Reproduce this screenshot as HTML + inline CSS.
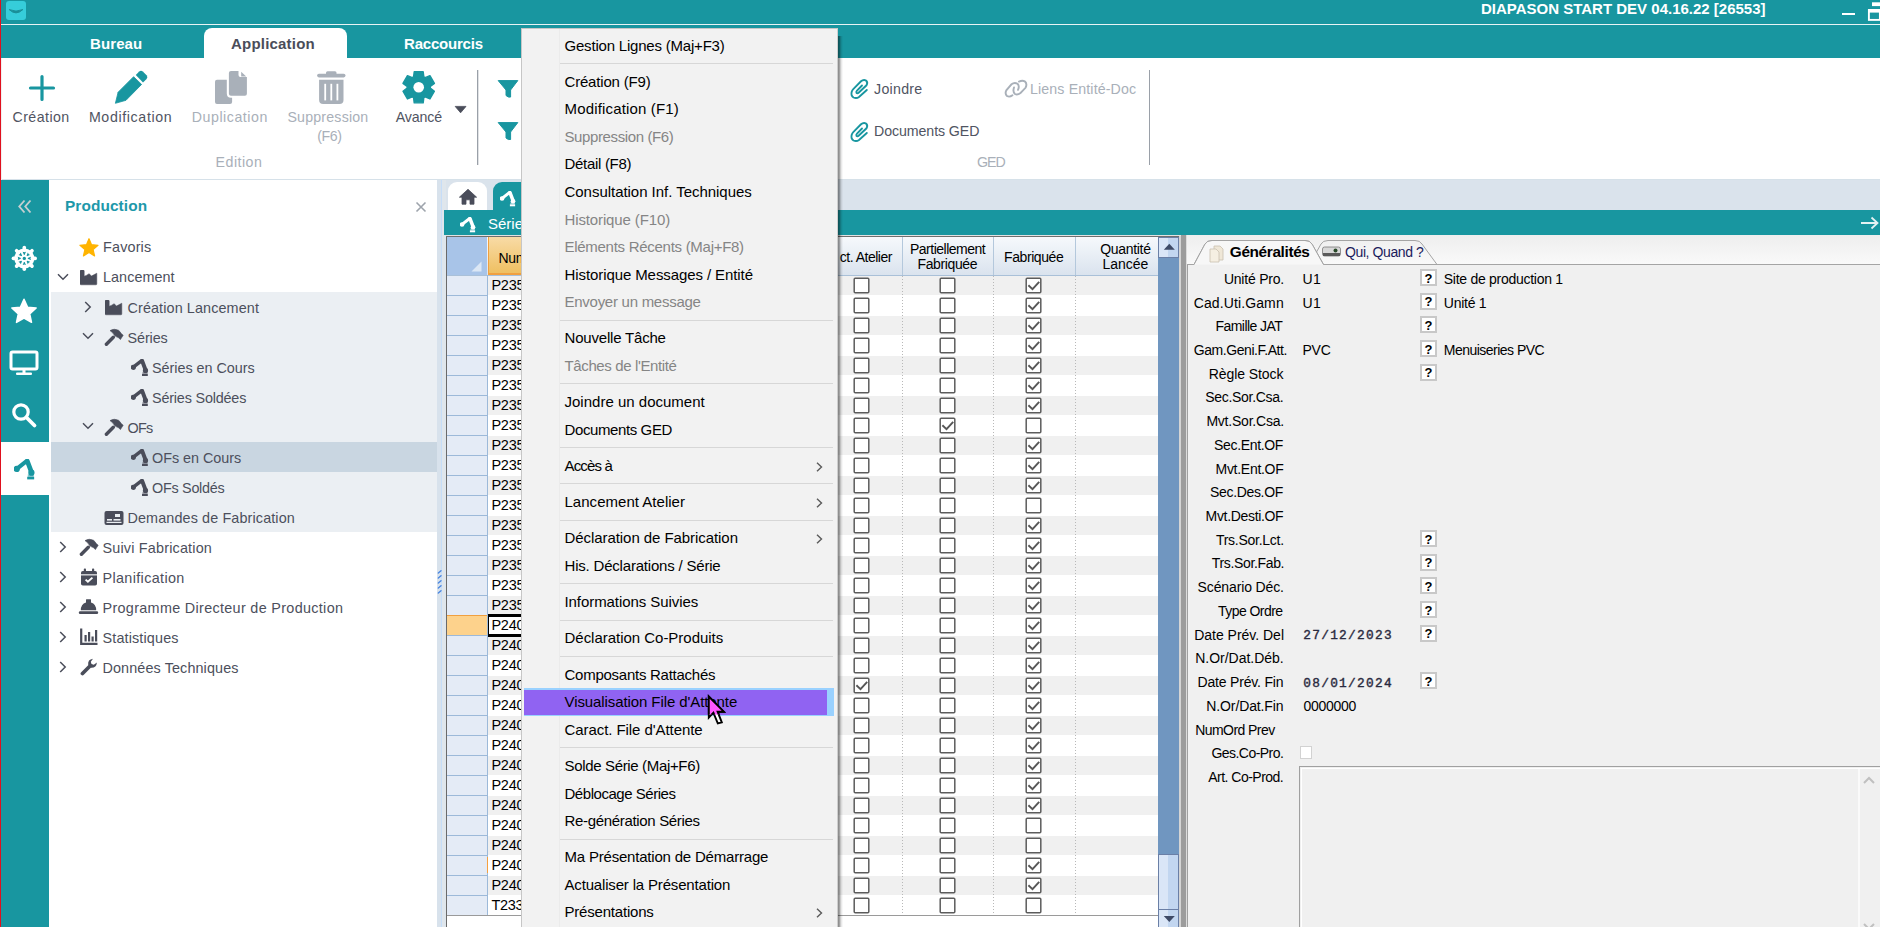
<!DOCTYPE html>
<html><head><meta charset="utf-8"><style>
html,body{margin:0;padding:0;}
body{width:1880px;height:927px;overflow:hidden;position:relative;background:#f0f0f0;font-family:"Liberation Sans", sans-serif;}
</style></head><body>
<div style="position:absolute;left:0px;top:0px;width:1880px;height:58px;background:#1896a0"></div>
<div style="position:absolute;left:0px;top:24px;width:1880px;height:1px;background:#e8f4f5"></div>
<svg style="position:absolute;left:6px;top:1px" width="21" height="20" viewBox="0 0 21 20"><rect x="0" y="0" width="20" height="19" rx="3" fill="#36cdda"/><path d="M3.2,8.6 Q10,15.2 16.8,8.6 Q10,11.6 3.2,8.6Z" fill="#1a8f98" stroke="#1a8f98" stroke-width="1" stroke-linejoin="round"/></svg>
<div style="position:absolute;left:1481px;top:0.30px;font:bold 15px/18.00px 'Liberation Sans', sans-serif;color:#ffffff;letter-spacing:0px;white-space:nowrap;">DIAPASON START DEV 04.16.22 [26553]</div>
<div style="position:absolute;left:1842px;top:13px;width:13px;height:2px;background:#fff"></div>
<svg style="position:absolute;left:1867px;top:1px" width="13" height="21"><path d="M5 1.3h8v3.8h-8z" fill="#fff"/><rect x="1.9" y="9" width="11" height="9.9" fill="none" stroke="#fff" stroke-width="1.9"/><rect x="1" y="8" width="12" height="3.6" fill="#fff"/></svg>
<div style="position:absolute;left:90px;top:34.80px;font:bold 15px/18.00px 'Liberation Sans', sans-serif;color:#ffffff;letter-spacing:0.1px;white-space:nowrap;">Bureau</div>
<div style="position:absolute;left:204px;top:28px;width:143px;height:31px;background:#fff;border-radius:8px 8px 0 0"></div>
<div style="position:absolute;left:231px;top:34.80px;font:bold 15px/18.00px 'Liberation Sans', sans-serif;color:#4a4d5a;letter-spacing:0.2px;white-space:nowrap;">Application</div>
<div style="position:absolute;left:404px;top:34.80px;font:bold 15px/18.00px 'Liberation Sans', sans-serif;color:#ffffff;letter-spacing:-0.2px;white-space:nowrap;">Raccourcis</div>
<div style="position:absolute;left:2px;top:58px;width:1878px;height:121px;background:#ffffff"></div>
<div style="position:absolute;left:2px;top:179px;width:1878px;height:1px;background:#d6e1e9"></div>
<div style="position:absolute;left:0px;top:0px;width:1px;height:927px;background:#e0101e"></div>
<svg style="position:absolute;left:0;top:0" width="560" height="180" viewBox="0 0 560 180">
<path d="M42 76.5V99.5M30.5 88H53.5" stroke="#1896a0" stroke-width="3.2" stroke-linecap="round"/>
<path d="M115.4,103.3 L118.1,92.2 L133.6,76.7 L141.6,84.4 L126,100.3 Z" fill="#1896a0" stroke="#1896a0" stroke-width="0.8" stroke-linejoin="round"/>
<path d="M135.8,75 L139.2,71.6 Q141,70 142.8,71.6 L146.6,75.2 Q148.2,77.2 146.6,79 L143,82.6 Z" fill="#1896a0"/>
<path d="M217,79.8 H226.8 V93.5 Q226.8,97.7 231,97.7 H232.1 V102 Q232.1,104.1 230,104.1 H217 Q215,104.1 215,102 V81.8 Q215,79.8 217,79.8Z" fill="#a9b0b9"/>
<path d="M231,71 H238.5 V75 Q238.5,77 240.5,77 H246.9 V93.7 Q246.9,95.7 244.9,95.7 H231 Q228.9,95.7 228.9,93.7 V73 Q228.9,71 231,71Z" fill="#a9b0b9"/>
<path d="M241.2,71.8 L246.2,76.5 H241.2Z" fill="#a9b0b9"/>
<rect x="317.1" y="73.8" width="28.4" height="3.6" rx="1.8" fill="#a9b0b9"/>
<rect x="326" y="71.2" width="10.5" height="3.5" rx="1.5" fill="#a9b0b9"/>
<path d="M319.1,79.8 H343.5 V100 Q343.5,104.1 339.5,104.1 H323.1 Q319.1,104.1 319.1,100Z" fill="#a9b0b9"/>
<rect x="324.3" y="83.8" width="1.8" height="16.6" fill="#fff"/><rect x="330.4" y="83.8" width="1.8" height="16.6" fill="#fff"/><rect x="336.5" y="83.8" width="1.8" height="16.6" fill="#fff"/>
<path d="M413.55,76.91 L414.22,71.73 L423.18,71.73 L423.85,76.91 L425.13,77.64 L429.94,75.64 L434.42,83.39 L430.28,86.56 L430.28,88.04 L434.42,91.21 L429.94,98.96 L425.13,96.96 L423.85,97.69 L423.18,102.87 L414.22,102.87 L413.55,97.69 L412.27,96.96 L407.46,98.96 L402.98,91.21 L407.12,88.04 L407.12,86.56 L402.98,83.39 L407.46,75.64 L412.27,77.64Z" fill="#1896a0" stroke="#1896a0" stroke-width="1.4" stroke-linejoin="round"/>
<circle cx="418.7" cy="87.3" r="5.3" fill="#fff"/>
<path d="M455.2,106.4 H466 L460.6,112.8Z" fill="#4a4d5a" stroke="#4a4d5a" stroke-width="0.8" stroke-linejoin="round"/>
<rect x="477" y="70" width="1.3" height="95" fill="#9aa0a8"/>
<path d="M498.2,80.6 H517.8 L510.6,90 V97 Q508.5,97.8 506,95.5 V90Z" fill="#1896a0" stroke="#1896a0" stroke-width="1" stroke-linejoin="round"/>
<path d="M498.2,122.6 H517.8 L510.6,132 V139.5 Q508.5,140.3 506,138 V132Z" fill="#1896a0" stroke="#1896a0" stroke-width="1" stroke-linejoin="round"/>
</svg>
<div style="position:absolute;left:12.5px;top:108.86px;font:normal 14.2px/17.04px 'Liberation Sans', sans-serif;color:#505462;letter-spacing:0.443px;white-space:nowrap;">Création</div>
<div style="position:absolute;left:88.9px;top:108.86px;font:normal 14.2px/17.04px 'Liberation Sans', sans-serif;color:#505462;letter-spacing:0.645px;white-space:nowrap;">Modification</div>
<div style="position:absolute;left:191.8px;top:108.86px;font:normal 14.2px/17.04px 'Liberation Sans', sans-serif;color:#a9b0b9;letter-spacing:0.53px;white-space:nowrap;">Duplication</div>
<div style="position:absolute;left:287.4px;top:108.86px;font:normal 14.2px/17.04px 'Liberation Sans', sans-serif;color:#a9b0b9;letter-spacing:0.2px;white-space:nowrap;">Suppression</div>
<div style="position:absolute;left:317.2px;top:127.86px;font:normal 14.2px/17.04px 'Liberation Sans', sans-serif;color:#a9b0b9;letter-spacing:-0.367px;white-space:nowrap;">(F6)</div>
<div style="position:absolute;left:395.7px;top:108.86px;font:normal 14.2px/17.04px 'Liberation Sans', sans-serif;color:#505462;letter-spacing:-0.12px;white-space:nowrap;">Avancé</div>
<div style="position:absolute;left:215.6px;top:153.86px;font:normal 14.2px/17.04px 'Liberation Sans', sans-serif;color:#a9b0b9;letter-spacing:0.467px;white-space:nowrap;">Edition</div>
<svg style="position:absolute;left:845px;top:75px" width="30" height="25" viewBox="0 0 30 25"><path d="M21.8,15 L14,22 Q11.5,23.8 8.5,22.5 Q5.5,20.5 6.8,16.5 Q7.3,15 8.5,13.8 L16,6.3 Q18.5,4 21,5.5 Q23.2,7.5 21.5,10.3 L13.6,17.7 Q12.3,18.8 11.5,17.8 Q10.9,16.8 12,15.6 L17,10.5" fill="none" stroke="#1896a0" stroke-width="1.9" stroke-linecap="round"/></svg>
<svg style="position:absolute;left:845px;top:117.5px" width="30" height="25" viewBox="0 0 30 25"><path d="M21.8,15 L14,22 Q11.5,23.8 8.5,22.5 Q5.5,20.5 6.8,16.5 Q7.3,15 8.5,13.8 L16,6.3 Q18.5,4 21,5.5 Q23.2,7.5 21.5,10.3 L13.6,17.7 Q12.3,18.8 11.5,17.8 Q10.9,16.8 12,15.6 L17,10.5" fill="none" stroke="#1896a0" stroke-width="1.9" stroke-linecap="round"/></svg>
<div style="position:absolute;left:874px;top:80.56px;font:normal 14.2px/17.04px 'Liberation Sans', sans-serif;color:#505462;letter-spacing:0.283px;white-space:nowrap;">Joindre</div>
<div style="position:absolute;left:874px;top:122.56px;font:normal 14.2px/17.04px 'Liberation Sans', sans-serif;color:#505462;letter-spacing:-0.083px;white-space:nowrap;">Documents GED</div>
<svg style="position:absolute;left:1000px;top:75px" width="32" height="25" viewBox="0 0 32 25"><path d="M12.5,20.3 Q9.5,22.5 7,21 Q4.5,18.5 6.5,15 L11.5,9.3 Q14.5,7 17.5,8.8 Q19.8,11 18,14.8" fill="none" stroke="#a9b0b9" stroke-width="1.9" stroke-linecap="round"/><path d="M19,6.6 Q22.5,4.8 25,6.5 Q27.5,9 25.5,12.8 L20.5,18 Q17.5,20.3 15,19 Q12.5,17 14,12.5" fill="none" stroke="#a9b0b9" stroke-width="1.9" stroke-linecap="round"/></svg>
<div style="position:absolute;left:1030px;top:80.56px;font:normal 14.2px/17.04px 'Liberation Sans', sans-serif;color:#a9b0b9;letter-spacing:0.133px;white-space:nowrap;">Liens Entité-Doc</div>
<div style="position:absolute;left:977px;top:153.56px;font:normal 14.2px/17.04px 'Liberation Sans', sans-serif;color:#a9b0b9;letter-spacing:-1.0px;white-space:nowrap;">GED</div>
<div style="position:absolute;left:1148.5px;top:70px;width:1.3px;height:95px;background:#9aa0a8"></div>
<div style="position:absolute;left:1px;top:180px;width:48px;height:747px;background:#1896a0"></div>
<svg style="position:absolute;left:0;top:180px" width="50" height="320" viewBox="0 180 50 320">
<path d="M24.5,200.5 L19.3,206.5 L24.5,212.5 M30.5,200.5 L25.3,206.5 L30.5,212.5" fill="none" stroke="#c5cfd0" stroke-width="1.9"/>
<circle cx="24.3" cy="258.4" r="8.4" fill="none" stroke="#fff" stroke-width="3.2"/>
<circle cx="24.3" cy="258.4" r="2.6" fill="none" stroke="#fff" stroke-width="1.8"/>
<line x1="26.70" y1="259.39" x2="32.15" y2="261.65" stroke="#fff" stroke-width="2"/><line x1="32.30" y1="258.40" x2="35.20" y2="258.40" stroke="#fff" stroke-width="3.6" stroke-linecap="round"/><line x1="25.29" y1="260.80" x2="27.55" y2="266.25" stroke="#fff" stroke-width="2"/><line x1="29.96" y1="264.06" x2="32.01" y2="266.11" stroke="#fff" stroke-width="3.6" stroke-linecap="round"/><line x1="23.31" y1="260.80" x2="21.05" y2="266.25" stroke="#fff" stroke-width="2"/><line x1="24.30" y1="266.40" x2="24.30" y2="269.30" stroke="#fff" stroke-width="3.6" stroke-linecap="round"/><line x1="21.90" y1="259.39" x2="16.45" y2="261.65" stroke="#fff" stroke-width="2"/><line x1="18.64" y1="264.06" x2="16.59" y2="266.11" stroke="#fff" stroke-width="3.6" stroke-linecap="round"/><line x1="21.90" y1="257.41" x2="16.45" y2="255.15" stroke="#fff" stroke-width="2"/><line x1="16.30" y1="258.40" x2="13.40" y2="258.40" stroke="#fff" stroke-width="3.6" stroke-linecap="round"/><line x1="23.31" y1="256.00" x2="21.05" y2="250.55" stroke="#fff" stroke-width="2"/><line x1="18.64" y1="252.74" x2="16.59" y2="250.69" stroke="#fff" stroke-width="3.6" stroke-linecap="round"/><line x1="25.29" y1="256.00" x2="27.55" y2="250.55" stroke="#fff" stroke-width="2"/><line x1="24.30" y1="250.40" x2="24.30" y2="247.50" stroke="#fff" stroke-width="3.6" stroke-linecap="round"/><line x1="26.70" y1="257.41" x2="32.15" y2="255.15" stroke="#fff" stroke-width="2"/><line x1="29.96" y1="252.74" x2="32.01" y2="250.69" stroke="#fff" stroke-width="3.6" stroke-linecap="round"/>
<path d="M24.00,299.20 L27.53,307.15 L36.17,308.04 L29.71,313.85 L31.52,322.36 L24.00,318.00 L16.48,322.36 L18.29,313.85 L11.83,308.04 L20.47,307.15Z" fill="#fff" stroke="#fff" stroke-width="1.5" stroke-linejoin="round"/>
<rect x="11" y="352" width="26" height="17" rx="1.5" fill="none" stroke="#fff" stroke-width="3"/>
<rect x="22.5" y="369" width="3" height="4" fill="#fff"/>
<rect x="16" y="372.5" width="16" height="2.6" rx="1" fill="#fff"/>
<circle cx="21" cy="412" r="7.2" fill="none" stroke="#fff" stroke-width="3.2"/>
<path d="M26.5,417.5 L34.5,425.5" stroke="#fff" stroke-width="3.8" stroke-linecap="round"/>
</svg>
<div style="position:absolute;left:1px;top:442px;width:48px;height:53px;background:#ffffff"></div>
<div style="position:absolute;left:49px;top:180px;width:1px;height:747px;background:#c2e3e7"></div>
<svg style="position:absolute;left:14px;top:459px" width="21.6" height="22.8" viewBox="0.5 0.8 18 19">
<path d="M2.8,9 L11.2,2.4" stroke="#1896a0" stroke-width="3.4" stroke-linecap="round"/>
<circle cx="2.8" cy="9.1" r="2.6" fill="#1896a0"/>
<path d="M11.6,2.6 L14.6,10.5" stroke="#1896a0" stroke-width="3.9" stroke-linecap="round"/>
<circle cx="15" cy="12.2" r="2.6" fill="#1896a0"/>
<rect x="12" y="13.6" width="5" height="2" fill="#1896a0" opacity="0.55"/>
<rect x="11.5" y="15.6" width="5.8" height="2.2" fill="#1896a0"/>
</svg>
<div style="position:absolute;left:49px;top:180px;width:388px;height:747px;background:#ffffff"></div>
<div style="position:absolute;left:51px;top:292px;width:386px;height:240px;background:#ebeff3"></div>
<div style="position:absolute;left:51px;top:442px;width:386px;height:30px;background:#c9d6e1"></div>
<div style="position:absolute;left:65px;top:196.92px;font:bold 15.4px/18.48px 'Liberation Sans', sans-serif;color:#1d98aa;letter-spacing:0.1px;white-space:nowrap;">Production</div>
<svg style="position:absolute;left:414px;top:200px" width="14" height="14"><path d="M2.5,2.5 L11.5,11.5 M11.5,2.5 L2.5,11.5" stroke="#9ea4ac" stroke-width="1.6"/></svg>
<svg style="position:absolute;left:79px;top:238px" width="20" height="19" viewBox="0 0 20 19"><path d="M10.00,0.70 L12.53,6.72 L19.04,7.26 L14.09,11.53 L15.58,17.89 L10.00,14.50 L4.42,17.89 L5.91,11.53 L0.96,7.26 L7.47,6.72Z" fill="#ffb400" stroke="#ffb400" stroke-width="1.2" stroke-linejoin="round"/></svg>
<div style="position:absolute;left:103.0px;top:239.17px;font:normal 14.4px/17.28px 'Liberation Sans', sans-serif;color:#4c4f5c;letter-spacing:0.167px;white-space:nowrap;">Favoris</div>
<svg style="position:absolute;left:57px;top:273px" width="12" height="8"><path d="M1,1.2 L6,6.2 L11,1.2" fill="none" stroke="#4a4d5a" stroke-width="1.5"/></svg>
<svg style="position:absolute;left:80px;top:270px" width="19" height="16" viewBox="0 0 19 16"><path d="M1,0 H3.2 Q4.2,0 4.2,1 V6.2 L6.3,5.4 L9.2,3.7 L11.4,6.1 L16.8,3.2 V14 Q16.8,14.8 16,14.8 H1 Q0,14.8 0,14 V1 Q0,0 1,0Z" fill="#4a4d5a" stroke="#4a4d5a" stroke-width="0.5" stroke-linejoin="round"/></svg>
<div style="position:absolute;left:103.0px;top:269.37px;font:normal 14.4px/17.28px 'Liberation Sans', sans-serif;color:#4c4f5c;letter-spacing:0.05px;white-space:nowrap;">Lancement</div>
<svg style="position:absolute;left:84px;top:301px" width="8" height="12"><path d="M1.2,1 L6.2,6 L1.2,11" fill="none" stroke="#4a4d5a" stroke-width="1.5"/></svg>
<svg style="position:absolute;left:104.5px;top:299.5px" width="19" height="16" viewBox="0 0 19 16"><path d="M1,0 H3.2 Q4.2,0 4.2,1 V6.2 L6.3,5.4 L9.2,3.7 L11.4,6.1 L16.8,3.2 V14 Q16.8,14.8 16,14.8 H1 Q0,14.8 0,14 V1 Q0,0 1,0Z" fill="#4a4d5a" stroke="#4a4d5a" stroke-width="0.5" stroke-linejoin="round"/></svg>
<div style="position:absolute;left:127.5px;top:299.77px;font:normal 14.4px/17.28px 'Liberation Sans', sans-serif;color:#4c4f5c;letter-spacing:0.106px;white-space:nowrap;">Création Lancement</div>
<svg style="position:absolute;left:82px;top:332px" width="12" height="8"><path d="M1,1.2 L6,6.2 L11,1.2" fill="none" stroke="#4a4d5a" stroke-width="1.5"/></svg>
<svg style="position:absolute;left:104px;top:328px" width="20" height="18" viewBox="0 0 20 18"><path d="M2.4,16.2 L9.3,9.3" stroke="#4a4d5a" stroke-width="3.4" stroke-linecap="round"/><path d="M6,2.6 Q10,0 14.5,2.3 Q16.2,3.5 17.2,5.6 L19.2,7.2 L16.4,11.6 L14.2,9.4 Q12,8.9 10.6,7.6 Q9.3,4.8 6,2.6Z" fill="#4a4d5a" stroke="#4a4d5a" stroke-width="0.6" stroke-linejoin="round"/></svg>
<div style="position:absolute;left:127.5px;top:329.97px;font:normal 14.4px/17.28px 'Liberation Sans', sans-serif;color:#4c4f5c;letter-spacing:-0.1px;white-space:nowrap;">Séries</div>
<svg style="position:absolute;left:130.5px;top:358.5px" width="18.0" height="19.0" viewBox="0.5 0.8 18 19">
<path d="M2.8,9 L11.2,2.4" stroke="#4a4d5a" stroke-width="3.4" stroke-linecap="round"/>
<circle cx="2.8" cy="9.1" r="2.6" fill="#4a4d5a"/>
<path d="M11.6,2.6 L14.6,10.5" stroke="#4a4d5a" stroke-width="3.9" stroke-linecap="round"/>
<circle cx="15" cy="12.2" r="2.6" fill="#4a4d5a"/>
<rect x="12" y="13.6" width="5" height="2" fill="#4a4d5a" opacity="0.55"/>
<rect x="11.5" y="15.6" width="5.8" height="2.2" fill="#4a4d5a"/>
</svg>
<div style="position:absolute;left:152.0px;top:359.67px;font:normal 14.4px/17.28px 'Liberation Sans', sans-serif;color:#4c4f5c;letter-spacing:-0.036px;white-space:nowrap;">Séries en Cours</div>
<svg style="position:absolute;left:130.5px;top:388.5px" width="18.0" height="19.0" viewBox="0.5 0.8 18 19">
<path d="M2.8,9 L11.2,2.4" stroke="#4a4d5a" stroke-width="3.4" stroke-linecap="round"/>
<circle cx="2.8" cy="9.1" r="2.6" fill="#4a4d5a"/>
<path d="M11.6,2.6 L14.6,10.5" stroke="#4a4d5a" stroke-width="3.9" stroke-linecap="round"/>
<circle cx="15" cy="12.2" r="2.6" fill="#4a4d5a"/>
<rect x="12" y="13.6" width="5" height="2" fill="#4a4d5a" opacity="0.55"/>
<rect x="11.5" y="15.6" width="5.8" height="2.2" fill="#4a4d5a"/>
</svg>
<div style="position:absolute;left:152.0px;top:389.67px;font:normal 14.4px/17.28px 'Liberation Sans', sans-serif;color:#4c4f5c;letter-spacing:-0.185px;white-space:nowrap;">Séries Soldées</div>
<svg style="position:absolute;left:82px;top:422px" width="12" height="8"><path d="M1,1.2 L6,6.2 L11,1.2" fill="none" stroke="#4a4d5a" stroke-width="1.5"/></svg>
<svg style="position:absolute;left:104px;top:418px" width="20" height="18" viewBox="0 0 20 18"><path d="M2.4,16.2 L9.3,9.3" stroke="#4a4d5a" stroke-width="3.4" stroke-linecap="round"/><path d="M6,2.6 Q10,0 14.5,2.3 Q16.2,3.5 17.2,5.6 L19.2,7.2 L16.4,11.6 L14.2,9.4 Q12,8.9 10.6,7.6 Q9.3,4.8 6,2.6Z" fill="#4a4d5a" stroke="#4a4d5a" stroke-width="0.6" stroke-linejoin="round"/></svg>
<div style="position:absolute;left:127.5px;top:419.87px;font:normal 14.4px/17.28px 'Liberation Sans', sans-serif;color:#4c4f5c;letter-spacing:-0.8px;white-space:nowrap;">OFs</div>
<svg style="position:absolute;left:130.5px;top:448.5px" width="18.0" height="19.0" viewBox="0.5 0.8 18 19">
<path d="M2.8,9 L11.2,2.4" stroke="#4a4d5a" stroke-width="3.4" stroke-linecap="round"/>
<circle cx="2.8" cy="9.1" r="2.6" fill="#4a4d5a"/>
<path d="M11.6,2.6 L14.6,10.5" stroke="#4a4d5a" stroke-width="3.9" stroke-linecap="round"/>
<circle cx="15" cy="12.2" r="2.6" fill="#4a4d5a"/>
<rect x="12" y="13.6" width="5" height="2" fill="#4a4d5a" opacity="0.55"/>
<rect x="11.5" y="15.6" width="5.8" height="2.2" fill="#4a4d5a"/>
</svg>
<div style="position:absolute;left:152.0px;top:449.67px;font:normal 14.4px/17.28px 'Liberation Sans', sans-serif;color:#4c4f5c;letter-spacing:-0.036px;white-space:nowrap;">OFs en Cours</div>
<svg style="position:absolute;left:130.5px;top:478.5px" width="18.0" height="19.0" viewBox="0.5 0.8 18 19">
<path d="M2.8,9 L11.2,2.4" stroke="#4a4d5a" stroke-width="3.4" stroke-linecap="round"/>
<circle cx="2.8" cy="9.1" r="2.6" fill="#4a4d5a"/>
<path d="M11.6,2.6 L14.6,10.5" stroke="#4a4d5a" stroke-width="3.9" stroke-linecap="round"/>
<circle cx="15" cy="12.2" r="2.6" fill="#4a4d5a"/>
<rect x="12" y="13.6" width="5" height="2" fill="#4a4d5a" opacity="0.55"/>
<rect x="11.5" y="15.6" width="5.8" height="2.2" fill="#4a4d5a"/>
</svg>
<div style="position:absolute;left:152.0px;top:479.67px;font:normal 14.4px/17.28px 'Liberation Sans', sans-serif;color:#4c4f5c;letter-spacing:-0.278px;white-space:nowrap;">OFs Soldés</div>
<svg style="position:absolute;left:103.5px;top:509.5px" width="20" height="16" viewBox="0 0 20 16"><rect x="0.5" y="1" width="19" height="14" rx="2" fill="#4a4d5a"/><rect x="3" y="9" width="5" height="1.6" fill="#ebeff3"/><rect x="9.5" y="9" width="7" height="1.6" fill="#ebeff3"/><rect x="11" y="4" width="5" height="3" fill="#ebeff3"/><rect x="2.5" y="11.8" width="15" height="1.2" fill="#ebeff3"/></svg>
<div style="position:absolute;left:127.5px;top:509.67px;font:normal 14.4px/17.28px 'Liberation Sans', sans-serif;color:#4c4f5c;letter-spacing:0.114px;white-space:nowrap;">Demandes de Fabrication</div>
<svg style="position:absolute;left:59px;top:541px" width="8" height="12"><path d="M1.2,1 L6.2,6 L1.2,11" fill="none" stroke="#4a4d5a" stroke-width="1.5"/></svg>
<svg style="position:absolute;left:79px;top:538px" width="20" height="18" viewBox="0 0 20 18"><path d="M2.4,16.2 L9.3,9.3" stroke="#4a4d5a" stroke-width="3.4" stroke-linecap="round"/><path d="M6,2.6 Q10,0 14.5,2.3 Q16.2,3.5 17.2,5.6 L19.2,7.2 L16.4,11.6 L14.2,9.4 Q12,8.9 10.6,7.6 Q9.3,4.8 6,2.6Z" fill="#4a4d5a" stroke="#4a4d5a" stroke-width="0.6" stroke-linejoin="round"/></svg>
<div style="position:absolute;left:102.5px;top:539.67px;font:normal 14.4px/17.28px 'Liberation Sans', sans-serif;color:#4c4f5c;letter-spacing:0.187px;white-space:nowrap;">Suivi Fabrication</div>
<svg style="position:absolute;left:59px;top:571px" width="8" height="12"><path d="M1.2,1 L6.2,6 L1.2,11" fill="none" stroke="#4a4d5a" stroke-width="1.5"/></svg>
<svg style="position:absolute;left:80px;top:567.5px" width="18" height="18" viewBox="0 0 18 18"><rect x="1" y="3" width="16" height="14.5" rx="1.8" fill="#4a4d5a"/><rect x="3.8" y="0.6" width="2.2" height="4" rx="0.8" fill="#4a4d5a"/><rect x="12" y="0.6" width="2.2" height="4" rx="0.8" fill="#4a4d5a"/><rect x="1" y="6.3" width="16" height="1.1" fill="#fff"/><path d="M5.6,11.6 L7.9,13.8 L12.4,9.6" fill="none" stroke="#fff" stroke-width="1.9"/></svg>
<div style="position:absolute;left:102.5px;top:569.67px;font:normal 14.4px/17.28px 'Liberation Sans', sans-serif;color:#4c4f5c;letter-spacing:0.35px;white-space:nowrap;">Planification</div>
<svg style="position:absolute;left:59px;top:601px" width="8" height="12"><path d="M1.2,1 L6.2,6 L1.2,11" fill="none" stroke="#4a4d5a" stroke-width="1.5"/></svg>
<svg style="position:absolute;left:78px;top:599px" width="21" height="16" viewBox="0 0 21 16"><path d="M2.8,11.3 Q2.8,5 8,3.4 V0.8 Q8,0.3 8.5,0.3 H12.5 Q13,0.3 13,0.8 V3.4 Q18.2,5 18.2,11.3Z" fill="#4a4d5a"/><rect x="0.8" y="12.3" width="19.4" height="2.8" rx="1.4" fill="#4a4d5a"/></svg>
<div style="position:absolute;left:102.5px;top:599.67px;font:normal 14.4px/17.28px 'Liberation Sans', sans-serif;color:#4c4f5c;letter-spacing:0.316px;white-space:nowrap;">Programme Directeur de Production</div>
<svg style="position:absolute;left:59px;top:631px" width="8" height="12"><path d="M1.2,1 L6.2,6 L1.2,11" fill="none" stroke="#4a4d5a" stroke-width="1.5"/></svg>
<svg style="position:absolute;left:80px;top:628px" width="18" height="17" viewBox="0 0 18 17"><path d="M1.2,0.5 V15.8 H17.5" fill="none" stroke="#4a4d5a" stroke-width="2.2"/><rect x="4.5" y="7" width="2.2" height="6.5" fill="#4a4d5a"/><rect x="8" y="4" width="2.2" height="9.5" fill="#4a4d5a"/><rect x="11.5" y="8.5" width="2.2" height="5" fill="#4a4d5a"/><rect x="15" y="2" width="2.2" height="11.5" fill="#4a4d5a"/></svg>
<div style="position:absolute;left:102.5px;top:629.67px;font:normal 14.4px/17.28px 'Liberation Sans', sans-serif;color:#4c4f5c;letter-spacing:0.145px;white-space:nowrap;">Statistiques</div>
<svg style="position:absolute;left:59px;top:661px" width="8" height="12"><path d="M1.2,1 L6.2,6 L1.2,11" fill="none" stroke="#4a4d5a" stroke-width="1.5"/></svg>
<svg style="position:absolute;left:80px;top:658px" width="18" height="18" viewBox="0 0 18 18"><path d="M2.5,15.5 L10,8" stroke="#4a4d5a" stroke-width="3.8" stroke-linecap="round"/><path d="M8.2,6.8 Q7.5,1.5 13,0.8 L10.8,3.8 L11.5,6 L13.8,6.7 L16.9,4.6 Q16.5,10 11,9.8Z" fill="#4a4d5a"/></svg>
<div style="position:absolute;left:102.5px;top:659.67px;font:normal 14.4px/17.28px 'Liberation Sans', sans-serif;color:#4c4f5c;letter-spacing:0.106px;white-space:nowrap;">Données Techniques</div>
<div style="position:absolute;left:437px;top:180px;width:4px;height:747px;background:#d8e2ec"></div>
<div style="position:absolute;left:441px;top:180px;width:1px;height:747px;background:#c6ddf8"></div>
<div style="position:absolute;left:442px;top:180px;width:4px;height:747px;background:#dfe6ec"></div>
<svg style="position:absolute;left:437px;top:568px" width="6" height="30"><path d="M1.3,5 L4,2.8" stroke="#4a86e0" stroke-width="1.4" stroke-linecap="round"/><path d="M1.3,10 L4,7.8" stroke="#4a86e0" stroke-width="1.4" stroke-linecap="round"/><path d="M1.3,15 L4,12.8" stroke="#4a86e0" stroke-width="1.4" stroke-linecap="round"/><path d="M1.3,20 L4,17.8" stroke="#4a86e0" stroke-width="1.4" stroke-linecap="round"/><path d="M1.3,25 L4,22.8" stroke="#4a86e0" stroke-width="1.4" stroke-linecap="round"/></svg>
<div style="position:absolute;left:446px;top:180px;width:1434px;height:30px;background:#dae3ec"></div>
<div style="position:absolute;left:447.5px;top:181.5px;width:39px;height:29px;background:#ffffff;border-radius:9px 9px 0 0"></div>
<svg style="position:absolute;left:458px;top:188px" width="20" height="18" viewBox="0 0 20 18"><path d="M10,1.3 L18.6,9.2 H16 V16.2 H12 V11.8 H8 V16.2 H4 V9.2 H1.4Z" fill="#4a4d5a" stroke="#4a4d5a" stroke-width="0.8" stroke-linejoin="round"/></svg>
<div style="position:absolute;left:492.5px;top:182px;width:60px;height:29px;background:#1896a0;border-radius:9px 9px 0 0"></div>
<svg style="position:absolute;left:500px;top:191px" width="16.2" height="17.1" viewBox="0.5 0.8 18 19">
<path d="M2.8,9 L11.2,2.4" stroke="#ffffff" stroke-width="3.4" stroke-linecap="round"/>
<circle cx="2.8" cy="9.1" r="2.6" fill="#ffffff"/>
<path d="M11.6,2.6 L14.6,10.5" stroke="#ffffff" stroke-width="3.9" stroke-linecap="round"/>
<circle cx="15" cy="12.2" r="2.6" fill="#ffffff"/>
<rect x="12" y="13.6" width="5" height="2" fill="#ffffff" opacity="0.55"/>
<rect x="11.5" y="15.6" width="5.8" height="2.2" fill="#ffffff"/>
</svg>
<div style="position:absolute;left:444px;top:210px;width:1436px;height:25px;background:#1896a0"></div>
<svg style="position:absolute;left:459.5px;top:216.8px" width="16.2" height="17.1" viewBox="0.5 0.8 18 19">
<path d="M2.8,9 L11.2,2.4" stroke="#ffffff" stroke-width="3.4" stroke-linecap="round"/>
<circle cx="2.8" cy="9.1" r="2.6" fill="#ffffff"/>
<path d="M11.6,2.6 L14.6,10.5" stroke="#ffffff" stroke-width="3.9" stroke-linecap="round"/>
<circle cx="15" cy="12.2" r="2.6" fill="#ffffff"/>
<rect x="12" y="13.6" width="5" height="2" fill="#ffffff" opacity="0.55"/>
<rect x="11.5" y="15.6" width="5.8" height="2.2" fill="#ffffff"/>
</svg>
<div style="position:absolute;left:488px;top:215.30px;font:normal 15px/18.00px 'Liberation Sans', sans-serif;color:#ffffff;letter-spacing:0px;white-space:nowrap;">Séries en Cours</div>
<svg style="position:absolute;left:1860px;top:216px" width="20" height="14"><path d="M1,7 H17 M11.5,1.5 L17.5,7 L11.5,12.5" fill="none" stroke="#e4f2f3" stroke-width="1.8"/></svg>
<div style="position:absolute;left:446px;top:236px;width:734px;height:691px;background:#ffffff"></div>
<div style="position:absolute;left:446px;top:236px;width:1px;height:691px;background:#6a6a6a"></div>
<div style="position:absolute;left:447px;top:237px;width:731px;height:38px;background:linear-gradient(#f6f9fc,#dae3ee)"></div>
<div style="position:absolute;left:447px;top:275px;width:711px;height:1px;background:#a9c0d8"></div>
<div style="position:absolute;left:447px;top:237px;width:40px;height:38px;background:#a8c4e8"></div>
<svg style="position:absolute;left:470px;top:260px" width="14" height="14"><path d="M11.5,1.5 V11.5 H1.5Z" fill="#dbe7f5"/></svg>
<div style="position:absolute;left:487.5px;top:237px;width:300px;height:38px;background:linear-gradient(#f8dba6,#efc062);border-left:1px solid #f0a040;border-bottom:2px solid #f0a040;box-sizing:border-box"></div>
<div style="position:absolute;left:498.5px;top:249.75px;font:normal 14px/16.80px 'Liberation Sans', sans-serif;color:#000;letter-spacing:-0.3px;white-space:nowrap;">Numéro</div>
<div style="position:absolute;left:902.0px;top:237px;width:1px;height:38px;background:#b4c8dc"></div>
<div style="position:absolute;left:993.3px;top:237px;width:1px;height:38px;background:#b4c8dc"></div>
<div style="position:absolute;left:1074.9px;top:237px;width:1px;height:38px;background:#b4c8dc"></div>
<div style="position:absolute;left:839.8px;top:249.25px;font:normal 14px/16.80px 'Liberation Sans', sans-serif;color:#000;letter-spacing:-0.5px;white-space:nowrap;">ct. Atelier</div>
<div style="position:absolute;left:910px;top:240.75px;font:normal 14px/16.80px 'Liberation Sans', sans-serif;color:#000;letter-spacing:-0.5px;white-space:nowrap;">Partiellement</div>
<div style="position:absolute;left:917.5px;top:256.25px;font:normal 14px/16.80px 'Liberation Sans', sans-serif;color:#000;letter-spacing:-0.375px;white-space:nowrap;">Fabriquée</div>
<div style="position:absolute;left:1004px;top:249.25px;font:normal 14px/16.80px 'Liberation Sans', sans-serif;color:#000;letter-spacing:-0.41px;white-space:nowrap;">Fabriquée</div>
<div style="position:absolute;left:1100.2px;top:240.75px;font:normal 14px/16.80px 'Liberation Sans', sans-serif;color:#000;letter-spacing:-0.31px;white-space:nowrap;">Quantité</div>
<div style="position:absolute;left:1102.5px;top:256.25px;font:normal 14px/16.80px 'Liberation Sans', sans-serif;color:#000;letter-spacing:-0.04px;white-space:nowrap;">Lancée</div>
<div style="position:absolute;left:487.5px;top:276px;width:671px;height:19px;background:#f0f0f0"></div><div style="position:absolute;left:447px;top:276px;width:40px;height:20px;background:#e4ebf6;border-bottom:1px solid #9cb9d9;box-sizing:border-box"></div><div style="position:absolute;left:491.5px;top:277.38px;font:normal 14.5px/17.40px 'Liberation Sans', sans-serif;color:#000;letter-spacing:-0.3px;white-space:nowrap;">P2350</div><div style="position:absolute;left:447px;top:296px;width:40px;height:20px;background:#e4ebf6;border-bottom:1px solid #9cb9d9;box-sizing:border-box"></div><div style="position:absolute;left:491.5px;top:297.38px;font:normal 14.5px/17.40px 'Liberation Sans', sans-serif;color:#000;letter-spacing:-0.3px;white-space:nowrap;">P2350</div><div style="position:absolute;left:487.5px;top:316px;width:671px;height:19px;background:#f0f0f0"></div><div style="position:absolute;left:447px;top:316px;width:40px;height:20px;background:#e4ebf6;border-bottom:1px solid #9cb9d9;box-sizing:border-box"></div><div style="position:absolute;left:491.5px;top:317.38px;font:normal 14.5px/17.40px 'Liberation Sans', sans-serif;color:#000;letter-spacing:-0.3px;white-space:nowrap;">P2350</div><div style="position:absolute;left:447px;top:336px;width:40px;height:20px;background:#e4ebf6;border-bottom:1px solid #9cb9d9;box-sizing:border-box"></div><div style="position:absolute;left:491.5px;top:337.38px;font:normal 14.5px/17.40px 'Liberation Sans', sans-serif;color:#000;letter-spacing:-0.3px;white-space:nowrap;">P2350</div><div style="position:absolute;left:487.5px;top:356px;width:671px;height:19px;background:#f0f0f0"></div><div style="position:absolute;left:447px;top:356px;width:40px;height:20px;background:#e4ebf6;border-bottom:1px solid #9cb9d9;box-sizing:border-box"></div><div style="position:absolute;left:491.5px;top:357.38px;font:normal 14.5px/17.40px 'Liberation Sans', sans-serif;color:#000;letter-spacing:-0.3px;white-space:nowrap;">P2350</div><div style="position:absolute;left:447px;top:376px;width:40px;height:20px;background:#e4ebf6;border-bottom:1px solid #9cb9d9;box-sizing:border-box"></div><div style="position:absolute;left:491.5px;top:377.38px;font:normal 14.5px/17.40px 'Liberation Sans', sans-serif;color:#000;letter-spacing:-0.3px;white-space:nowrap;">P2350</div><div style="position:absolute;left:487.5px;top:396px;width:671px;height:19px;background:#f0f0f0"></div><div style="position:absolute;left:447px;top:396px;width:40px;height:20px;background:#e4ebf6;border-bottom:1px solid #9cb9d9;box-sizing:border-box"></div><div style="position:absolute;left:491.5px;top:397.38px;font:normal 14.5px/17.40px 'Liberation Sans', sans-serif;color:#000;letter-spacing:-0.3px;white-space:nowrap;">P2350</div><div style="position:absolute;left:447px;top:416px;width:40px;height:20px;background:#e4ebf6;border-bottom:1px solid #9cb9d9;box-sizing:border-box"></div><div style="position:absolute;left:491.5px;top:417.38px;font:normal 14.5px/17.40px 'Liberation Sans', sans-serif;color:#000;letter-spacing:-0.3px;white-space:nowrap;">P2350</div><div style="position:absolute;left:487.5px;top:436px;width:671px;height:19px;background:#f0f0f0"></div><div style="position:absolute;left:447px;top:436px;width:40px;height:20px;background:#e4ebf6;border-bottom:1px solid #9cb9d9;box-sizing:border-box"></div><div style="position:absolute;left:491.5px;top:437.38px;font:normal 14.5px/17.40px 'Liberation Sans', sans-serif;color:#000;letter-spacing:-0.3px;white-space:nowrap;">P2350</div><div style="position:absolute;left:447px;top:456px;width:40px;height:20px;background:#e4ebf6;border-bottom:1px solid #9cb9d9;box-sizing:border-box"></div><div style="position:absolute;left:491.5px;top:457.38px;font:normal 14.5px/17.40px 'Liberation Sans', sans-serif;color:#000;letter-spacing:-0.3px;white-space:nowrap;">P2350</div><div style="position:absolute;left:487.5px;top:476px;width:671px;height:19px;background:#f0f0f0"></div><div style="position:absolute;left:447px;top:476px;width:40px;height:20px;background:#e4ebf6;border-bottom:1px solid #9cb9d9;box-sizing:border-box"></div><div style="position:absolute;left:491.5px;top:477.38px;font:normal 14.5px/17.40px 'Liberation Sans', sans-serif;color:#000;letter-spacing:-0.3px;white-space:nowrap;">P2350</div><div style="position:absolute;left:447px;top:496px;width:40px;height:20px;background:#e4ebf6;border-bottom:1px solid #9cb9d9;box-sizing:border-box"></div><div style="position:absolute;left:491.5px;top:497.38px;font:normal 14.5px/17.40px 'Liberation Sans', sans-serif;color:#000;letter-spacing:-0.3px;white-space:nowrap;">P2350</div><div style="position:absolute;left:487.5px;top:516px;width:671px;height:19px;background:#f0f0f0"></div><div style="position:absolute;left:447px;top:516px;width:40px;height:20px;background:#e4ebf6;border-bottom:1px solid #9cb9d9;box-sizing:border-box"></div><div style="position:absolute;left:491.5px;top:517.38px;font:normal 14.5px/17.40px 'Liberation Sans', sans-serif;color:#000;letter-spacing:-0.3px;white-space:nowrap;">P2350</div><div style="position:absolute;left:447px;top:536px;width:40px;height:20px;background:#e4ebf6;border-bottom:1px solid #9cb9d9;box-sizing:border-box"></div><div style="position:absolute;left:491.5px;top:537.38px;font:normal 14.5px/17.40px 'Liberation Sans', sans-serif;color:#000;letter-spacing:-0.3px;white-space:nowrap;">P2350</div><div style="position:absolute;left:487.5px;top:556px;width:671px;height:19px;background:#f0f0f0"></div><div style="position:absolute;left:447px;top:556px;width:40px;height:20px;background:#e4ebf6;border-bottom:1px solid #9cb9d9;box-sizing:border-box"></div><div style="position:absolute;left:491.5px;top:557.38px;font:normal 14.5px/17.40px 'Liberation Sans', sans-serif;color:#000;letter-spacing:-0.3px;white-space:nowrap;">P2350</div><div style="position:absolute;left:447px;top:576px;width:40px;height:20px;background:#e4ebf6;border-bottom:1px solid #9cb9d9;box-sizing:border-box"></div><div style="position:absolute;left:491.5px;top:577.38px;font:normal 14.5px/17.40px 'Liberation Sans', sans-serif;color:#000;letter-spacing:-0.3px;white-space:nowrap;">P2350</div><div style="position:absolute;left:487.5px;top:596px;width:671px;height:19px;background:#f0f0f0"></div><div style="position:absolute;left:447px;top:596px;width:40px;height:20px;background:#e4ebf6;border-bottom:1px solid #9cb9d9;box-sizing:border-box"></div><div style="position:absolute;left:491.5px;top:597.38px;font:normal 14.5px/17.40px 'Liberation Sans', sans-serif;color:#000;letter-spacing:-0.3px;white-space:nowrap;">P2350</div><div style="position:absolute;left:447px;top:616px;width:40px;height:20px;background:#e4ebf6;border-bottom:1px solid #9cb9d9;box-sizing:border-box"></div><div style="position:absolute;left:491.5px;top:617.38px;font:normal 14.5px/17.40px 'Liberation Sans', sans-serif;color:#000;letter-spacing:-0.3px;white-space:nowrap;">P2400</div><div style="position:absolute;left:487.5px;top:636px;width:671px;height:19px;background:#f0f0f0"></div><div style="position:absolute;left:447px;top:636px;width:40px;height:20px;background:#e4ebf6;border-bottom:1px solid #9cb9d9;box-sizing:border-box"></div><div style="position:absolute;left:491.5px;top:637.38px;font:normal 14.5px/17.40px 'Liberation Sans', sans-serif;color:#000;letter-spacing:-0.3px;white-space:nowrap;">P2400</div><div style="position:absolute;left:447px;top:656px;width:40px;height:20px;background:#e4ebf6;border-bottom:1px solid #9cb9d9;box-sizing:border-box"></div><div style="position:absolute;left:491.5px;top:657.38px;font:normal 14.5px/17.40px 'Liberation Sans', sans-serif;color:#000;letter-spacing:-0.3px;white-space:nowrap;">P2400</div><div style="position:absolute;left:487.5px;top:676px;width:671px;height:19px;background:#f0f0f0"></div><div style="position:absolute;left:447px;top:676px;width:40px;height:20px;background:#e4ebf6;border-bottom:1px solid #9cb9d9;box-sizing:border-box"></div><div style="position:absolute;left:491.5px;top:677.38px;font:normal 14.5px/17.40px 'Liberation Sans', sans-serif;color:#000;letter-spacing:-0.3px;white-space:nowrap;">P2400</div><div style="position:absolute;left:447px;top:696px;width:40px;height:20px;background:#e4ebf6;border-bottom:1px solid #9cb9d9;box-sizing:border-box"></div><div style="position:absolute;left:491.5px;top:697.38px;font:normal 14.5px/17.40px 'Liberation Sans', sans-serif;color:#000;letter-spacing:-0.3px;white-space:nowrap;">P2400</div><div style="position:absolute;left:487.5px;top:716px;width:671px;height:19px;background:#f0f0f0"></div><div style="position:absolute;left:447px;top:716px;width:40px;height:20px;background:#e4ebf6;border-bottom:1px solid #9cb9d9;box-sizing:border-box"></div><div style="position:absolute;left:491.5px;top:717.38px;font:normal 14.5px/17.40px 'Liberation Sans', sans-serif;color:#000;letter-spacing:-0.3px;white-space:nowrap;">P2400</div><div style="position:absolute;left:447px;top:736px;width:40px;height:20px;background:#e4ebf6;border-bottom:1px solid #9cb9d9;box-sizing:border-box"></div><div style="position:absolute;left:491.5px;top:737.38px;font:normal 14.5px/17.40px 'Liberation Sans', sans-serif;color:#000;letter-spacing:-0.3px;white-space:nowrap;">P2400</div><div style="position:absolute;left:487.5px;top:756px;width:671px;height:19px;background:#f0f0f0"></div><div style="position:absolute;left:447px;top:756px;width:40px;height:20px;background:#e4ebf6;border-bottom:1px solid #9cb9d9;box-sizing:border-box"></div><div style="position:absolute;left:491.5px;top:757.38px;font:normal 14.5px/17.40px 'Liberation Sans', sans-serif;color:#000;letter-spacing:-0.3px;white-space:nowrap;">P2400</div><div style="position:absolute;left:447px;top:776px;width:40px;height:20px;background:#e4ebf6;border-bottom:1px solid #9cb9d9;box-sizing:border-box"></div><div style="position:absolute;left:491.5px;top:777.38px;font:normal 14.5px/17.40px 'Liberation Sans', sans-serif;color:#000;letter-spacing:-0.3px;white-space:nowrap;">P2400</div><div style="position:absolute;left:487.5px;top:796px;width:671px;height:19px;background:#f0f0f0"></div><div style="position:absolute;left:447px;top:796px;width:40px;height:20px;background:#e4ebf6;border-bottom:1px solid #9cb9d9;box-sizing:border-box"></div><div style="position:absolute;left:491.5px;top:797.38px;font:normal 14.5px/17.40px 'Liberation Sans', sans-serif;color:#000;letter-spacing:-0.3px;white-space:nowrap;">P2400</div><div style="position:absolute;left:447px;top:816px;width:40px;height:20px;background:#e4ebf6;border-bottom:1px solid #9cb9d9;box-sizing:border-box"></div><div style="position:absolute;left:491.5px;top:817.38px;font:normal 14.5px/17.40px 'Liberation Sans', sans-serif;color:#000;letter-spacing:-0.3px;white-space:nowrap;">P2400</div><div style="position:absolute;left:487.5px;top:836px;width:671px;height:19px;background:#f0f0f0"></div><div style="position:absolute;left:447px;top:836px;width:40px;height:20px;background:#e4ebf6;border-bottom:1px solid #9cb9d9;box-sizing:border-box"></div><div style="position:absolute;left:491.5px;top:837.38px;font:normal 14.5px/17.40px 'Liberation Sans', sans-serif;color:#000;letter-spacing:-0.3px;white-space:nowrap;">P2400</div><div style="position:absolute;left:447px;top:856px;width:40px;height:20px;background:#e4ebf6;border-bottom:1px solid #9cb9d9;box-sizing:border-box"></div><div style="position:absolute;left:491.5px;top:857.38px;font:normal 14.5px/17.40px 'Liberation Sans', sans-serif;color:#000;letter-spacing:-0.3px;white-space:nowrap;">P2400</div><div style="position:absolute;left:487.5px;top:876px;width:671px;height:19px;background:#f0f0f0"></div><div style="position:absolute;left:447px;top:876px;width:40px;height:20px;background:#e4ebf6;border-bottom:1px solid #9cb9d9;box-sizing:border-box"></div><div style="position:absolute;left:491.5px;top:877.38px;font:normal 14.5px/17.40px 'Liberation Sans', sans-serif;color:#000;letter-spacing:-0.3px;white-space:nowrap;">P2400</div><div style="position:absolute;left:447px;top:896px;width:40px;height:20px;background:#e4ebf6;border-bottom:1px solid #9cb9d9;box-sizing:border-box"></div><div style="position:absolute;left:491.5px;top:897.38px;font:normal 14.5px/17.40px 'Liberation Sans', sans-serif;color:#000;letter-spacing:-0.3px;white-space:nowrap;">T2330</div>
<div style="position:absolute;left:487px;top:275px;width:1px;height:640px;background:#9cb9d9"></div>
<div style="position:absolute;left:447px;top:615px;width:40px;height:21px;background:#fdd28c;border-top:1.3px solid #f0a040;border-bottom:1px solid #9cb9d9;box-sizing:border-box"></div>
<div style="position:absolute;left:488.2px;top:614.2px;width:300px;height:23px;border:1.8px solid #000;border-top-width:3px;border-bottom-width:3px;box-sizing:border-box"></div>
<div style="position:absolute;left:486.5px;top:857px;width:1px;height:16px;background:#f5a040"></div>
<div style="position:absolute;left:902.0px;top:276px;width:1px;height:639px;background:repeating-linear-gradient(#b8b8b8 0 1px,transparent 1px 3px)"></div>
<div style="position:absolute;left:993.3px;top:276px;width:1px;height:639px;background:repeating-linear-gradient(#b8b8b8 0 1px,transparent 1px 3px)"></div>
<div style="position:absolute;left:1074.9px;top:276px;width:1px;height:639px;background:repeating-linear-gradient(#b8b8b8 0 1px,transparent 1px 3px)"></div>
<div style="position:absolute;left:447px;top:915px;width:711px;height:1px;background:#9a9a9a"></div>
<svg style="position:absolute;left:852.8px;top:277.0px" width="17" height="17"><rect x="1.2" y="1.2" width="14.6" height="14.6" rx="1" fill="#fff" stroke="#5c5c5c" stroke-width="1.5"/></svg><svg style="position:absolute;left:939.2px;top:277.0px" width="17" height="17"><rect x="1.2" y="1.2" width="14.6" height="14.6" rx="1" fill="#fff" stroke="#5c5c5c" stroke-width="1.5"/></svg><svg style="position:absolute;left:1025.4px;top:277.0px" width="17" height="17"><rect x="1.2" y="1.2" width="14.6" height="14.6" rx="1" fill="#fff" stroke="#5c5c5c" stroke-width="1.5"/><path d="M3.4,8.3 L7.5,12.2 L14.2,4.8" fill="none" stroke="#575757" stroke-width="1.9"/></svg><svg style="position:absolute;left:852.8px;top:297.0px" width="17" height="17"><rect x="1.2" y="1.2" width="14.6" height="14.6" rx="1" fill="#fff" stroke="#5c5c5c" stroke-width="1.5"/></svg><svg style="position:absolute;left:939.2px;top:297.0px" width="17" height="17"><rect x="1.2" y="1.2" width="14.6" height="14.6" rx="1" fill="#fff" stroke="#5c5c5c" stroke-width="1.5"/></svg><svg style="position:absolute;left:1025.4px;top:297.0px" width="17" height="17"><rect x="1.2" y="1.2" width="14.6" height="14.6" rx="1" fill="#fff" stroke="#5c5c5c" stroke-width="1.5"/><path d="M3.4,8.3 L7.5,12.2 L14.2,4.8" fill="none" stroke="#575757" stroke-width="1.9"/></svg><svg style="position:absolute;left:852.8px;top:317.0px" width="17" height="17"><rect x="1.2" y="1.2" width="14.6" height="14.6" rx="1" fill="#fff" stroke="#5c5c5c" stroke-width="1.5"/></svg><svg style="position:absolute;left:939.2px;top:317.0px" width="17" height="17"><rect x="1.2" y="1.2" width="14.6" height="14.6" rx="1" fill="#fff" stroke="#5c5c5c" stroke-width="1.5"/></svg><svg style="position:absolute;left:1025.4px;top:317.0px" width="17" height="17"><rect x="1.2" y="1.2" width="14.6" height="14.6" rx="1" fill="#fff" stroke="#5c5c5c" stroke-width="1.5"/><path d="M3.4,8.3 L7.5,12.2 L14.2,4.8" fill="none" stroke="#575757" stroke-width="1.9"/></svg><svg style="position:absolute;left:852.8px;top:337.0px" width="17" height="17"><rect x="1.2" y="1.2" width="14.6" height="14.6" rx="1" fill="#fff" stroke="#5c5c5c" stroke-width="1.5"/></svg><svg style="position:absolute;left:939.2px;top:337.0px" width="17" height="17"><rect x="1.2" y="1.2" width="14.6" height="14.6" rx="1" fill="#fff" stroke="#5c5c5c" stroke-width="1.5"/></svg><svg style="position:absolute;left:1025.4px;top:337.0px" width="17" height="17"><rect x="1.2" y="1.2" width="14.6" height="14.6" rx="1" fill="#fff" stroke="#5c5c5c" stroke-width="1.5"/><path d="M3.4,8.3 L7.5,12.2 L14.2,4.8" fill="none" stroke="#575757" stroke-width="1.9"/></svg><svg style="position:absolute;left:852.8px;top:357.0px" width="17" height="17"><rect x="1.2" y="1.2" width="14.6" height="14.6" rx="1" fill="#fff" stroke="#5c5c5c" stroke-width="1.5"/></svg><svg style="position:absolute;left:939.2px;top:357.0px" width="17" height="17"><rect x="1.2" y="1.2" width="14.6" height="14.6" rx="1" fill="#fff" stroke="#5c5c5c" stroke-width="1.5"/></svg><svg style="position:absolute;left:1025.4px;top:357.0px" width="17" height="17"><rect x="1.2" y="1.2" width="14.6" height="14.6" rx="1" fill="#fff" stroke="#5c5c5c" stroke-width="1.5"/><path d="M3.4,8.3 L7.5,12.2 L14.2,4.8" fill="none" stroke="#575757" stroke-width="1.9"/></svg><svg style="position:absolute;left:852.8px;top:377.0px" width="17" height="17"><rect x="1.2" y="1.2" width="14.6" height="14.6" rx="1" fill="#fff" stroke="#5c5c5c" stroke-width="1.5"/></svg><svg style="position:absolute;left:939.2px;top:377.0px" width="17" height="17"><rect x="1.2" y="1.2" width="14.6" height="14.6" rx="1" fill="#fff" stroke="#5c5c5c" stroke-width="1.5"/></svg><svg style="position:absolute;left:1025.4px;top:377.0px" width="17" height="17"><rect x="1.2" y="1.2" width="14.6" height="14.6" rx="1" fill="#fff" stroke="#5c5c5c" stroke-width="1.5"/><path d="M3.4,8.3 L7.5,12.2 L14.2,4.8" fill="none" stroke="#575757" stroke-width="1.9"/></svg><svg style="position:absolute;left:852.8px;top:397.0px" width="17" height="17"><rect x="1.2" y="1.2" width="14.6" height="14.6" rx="1" fill="#fff" stroke="#5c5c5c" stroke-width="1.5"/></svg><svg style="position:absolute;left:939.2px;top:397.0px" width="17" height="17"><rect x="1.2" y="1.2" width="14.6" height="14.6" rx="1" fill="#fff" stroke="#5c5c5c" stroke-width="1.5"/></svg><svg style="position:absolute;left:1025.4px;top:397.0px" width="17" height="17"><rect x="1.2" y="1.2" width="14.6" height="14.6" rx="1" fill="#fff" stroke="#5c5c5c" stroke-width="1.5"/><path d="M3.4,8.3 L7.5,12.2 L14.2,4.8" fill="none" stroke="#575757" stroke-width="1.9"/></svg><svg style="position:absolute;left:852.8px;top:417.0px" width="17" height="17"><rect x="1.2" y="1.2" width="14.6" height="14.6" rx="1" fill="#fff" stroke="#5c5c5c" stroke-width="1.5"/></svg><svg style="position:absolute;left:939.2px;top:417.0px" width="17" height="17"><rect x="1.2" y="1.2" width="14.6" height="14.6" rx="1" fill="#fff" stroke="#5c5c5c" stroke-width="1.5"/><path d="M3.4,8.3 L7.5,12.2 L14.2,4.8" fill="none" stroke="#575757" stroke-width="1.9"/></svg><svg style="position:absolute;left:1025.4px;top:417.0px" width="17" height="17"><rect x="1.2" y="1.2" width="14.6" height="14.6" rx="1" fill="#fff" stroke="#5c5c5c" stroke-width="1.5"/></svg><svg style="position:absolute;left:852.8px;top:437.0px" width="17" height="17"><rect x="1.2" y="1.2" width="14.6" height="14.6" rx="1" fill="#fff" stroke="#5c5c5c" stroke-width="1.5"/></svg><svg style="position:absolute;left:939.2px;top:437.0px" width="17" height="17"><rect x="1.2" y="1.2" width="14.6" height="14.6" rx="1" fill="#fff" stroke="#5c5c5c" stroke-width="1.5"/></svg><svg style="position:absolute;left:1025.4px;top:437.0px" width="17" height="17"><rect x="1.2" y="1.2" width="14.6" height="14.6" rx="1" fill="#fff" stroke="#5c5c5c" stroke-width="1.5"/><path d="M3.4,8.3 L7.5,12.2 L14.2,4.8" fill="none" stroke="#575757" stroke-width="1.9"/></svg><svg style="position:absolute;left:852.8px;top:457.0px" width="17" height="17"><rect x="1.2" y="1.2" width="14.6" height="14.6" rx="1" fill="#fff" stroke="#5c5c5c" stroke-width="1.5"/></svg><svg style="position:absolute;left:939.2px;top:457.0px" width="17" height="17"><rect x="1.2" y="1.2" width="14.6" height="14.6" rx="1" fill="#fff" stroke="#5c5c5c" stroke-width="1.5"/></svg><svg style="position:absolute;left:1025.4px;top:457.0px" width="17" height="17"><rect x="1.2" y="1.2" width="14.6" height="14.6" rx="1" fill="#fff" stroke="#5c5c5c" stroke-width="1.5"/><path d="M3.4,8.3 L7.5,12.2 L14.2,4.8" fill="none" stroke="#575757" stroke-width="1.9"/></svg><svg style="position:absolute;left:852.8px;top:477.0px" width="17" height="17"><rect x="1.2" y="1.2" width="14.6" height="14.6" rx="1" fill="#fff" stroke="#5c5c5c" stroke-width="1.5"/></svg><svg style="position:absolute;left:939.2px;top:477.0px" width="17" height="17"><rect x="1.2" y="1.2" width="14.6" height="14.6" rx="1" fill="#fff" stroke="#5c5c5c" stroke-width="1.5"/></svg><svg style="position:absolute;left:1025.4px;top:477.0px" width="17" height="17"><rect x="1.2" y="1.2" width="14.6" height="14.6" rx="1" fill="#fff" stroke="#5c5c5c" stroke-width="1.5"/><path d="M3.4,8.3 L7.5,12.2 L14.2,4.8" fill="none" stroke="#575757" stroke-width="1.9"/></svg><svg style="position:absolute;left:852.8px;top:497.0px" width="17" height="17"><rect x="1.2" y="1.2" width="14.6" height="14.6" rx="1" fill="#fff" stroke="#5c5c5c" stroke-width="1.5"/></svg><svg style="position:absolute;left:939.2px;top:497.0px" width="17" height="17"><rect x="1.2" y="1.2" width="14.6" height="14.6" rx="1" fill="#fff" stroke="#5c5c5c" stroke-width="1.5"/></svg><svg style="position:absolute;left:1025.4px;top:497.0px" width="17" height="17"><rect x="1.2" y="1.2" width="14.6" height="14.6" rx="1" fill="#fff" stroke="#5c5c5c" stroke-width="1.5"/></svg><svg style="position:absolute;left:852.8px;top:517.0px" width="17" height="17"><rect x="1.2" y="1.2" width="14.6" height="14.6" rx="1" fill="#fff" stroke="#5c5c5c" stroke-width="1.5"/></svg><svg style="position:absolute;left:939.2px;top:517.0px" width="17" height="17"><rect x="1.2" y="1.2" width="14.6" height="14.6" rx="1" fill="#fff" stroke="#5c5c5c" stroke-width="1.5"/></svg><svg style="position:absolute;left:1025.4px;top:517.0px" width="17" height="17"><rect x="1.2" y="1.2" width="14.6" height="14.6" rx="1" fill="#fff" stroke="#5c5c5c" stroke-width="1.5"/><path d="M3.4,8.3 L7.5,12.2 L14.2,4.8" fill="none" stroke="#575757" stroke-width="1.9"/></svg><svg style="position:absolute;left:852.8px;top:537.0px" width="17" height="17"><rect x="1.2" y="1.2" width="14.6" height="14.6" rx="1" fill="#fff" stroke="#5c5c5c" stroke-width="1.5"/></svg><svg style="position:absolute;left:939.2px;top:537.0px" width="17" height="17"><rect x="1.2" y="1.2" width="14.6" height="14.6" rx="1" fill="#fff" stroke="#5c5c5c" stroke-width="1.5"/></svg><svg style="position:absolute;left:1025.4px;top:537.0px" width="17" height="17"><rect x="1.2" y="1.2" width="14.6" height="14.6" rx="1" fill="#fff" stroke="#5c5c5c" stroke-width="1.5"/><path d="M3.4,8.3 L7.5,12.2 L14.2,4.8" fill="none" stroke="#575757" stroke-width="1.9"/></svg><svg style="position:absolute;left:852.8px;top:557.0px" width="17" height="17"><rect x="1.2" y="1.2" width="14.6" height="14.6" rx="1" fill="#fff" stroke="#5c5c5c" stroke-width="1.5"/></svg><svg style="position:absolute;left:939.2px;top:557.0px" width="17" height="17"><rect x="1.2" y="1.2" width="14.6" height="14.6" rx="1" fill="#fff" stroke="#5c5c5c" stroke-width="1.5"/></svg><svg style="position:absolute;left:1025.4px;top:557.0px" width="17" height="17"><rect x="1.2" y="1.2" width="14.6" height="14.6" rx="1" fill="#fff" stroke="#5c5c5c" stroke-width="1.5"/><path d="M3.4,8.3 L7.5,12.2 L14.2,4.8" fill="none" stroke="#575757" stroke-width="1.9"/></svg><svg style="position:absolute;left:852.8px;top:577.0px" width="17" height="17"><rect x="1.2" y="1.2" width="14.6" height="14.6" rx="1" fill="#fff" stroke="#5c5c5c" stroke-width="1.5"/></svg><svg style="position:absolute;left:939.2px;top:577.0px" width="17" height="17"><rect x="1.2" y="1.2" width="14.6" height="14.6" rx="1" fill="#fff" stroke="#5c5c5c" stroke-width="1.5"/></svg><svg style="position:absolute;left:1025.4px;top:577.0px" width="17" height="17"><rect x="1.2" y="1.2" width="14.6" height="14.6" rx="1" fill="#fff" stroke="#5c5c5c" stroke-width="1.5"/><path d="M3.4,8.3 L7.5,12.2 L14.2,4.8" fill="none" stroke="#575757" stroke-width="1.9"/></svg><svg style="position:absolute;left:852.8px;top:597.0px" width="17" height="17"><rect x="1.2" y="1.2" width="14.6" height="14.6" rx="1" fill="#fff" stroke="#5c5c5c" stroke-width="1.5"/></svg><svg style="position:absolute;left:939.2px;top:597.0px" width="17" height="17"><rect x="1.2" y="1.2" width="14.6" height="14.6" rx="1" fill="#fff" stroke="#5c5c5c" stroke-width="1.5"/></svg><svg style="position:absolute;left:1025.4px;top:597.0px" width="17" height="17"><rect x="1.2" y="1.2" width="14.6" height="14.6" rx="1" fill="#fff" stroke="#5c5c5c" stroke-width="1.5"/><path d="M3.4,8.3 L7.5,12.2 L14.2,4.8" fill="none" stroke="#575757" stroke-width="1.9"/></svg><svg style="position:absolute;left:852.8px;top:617.0px" width="17" height="17"><rect x="1.2" y="1.2" width="14.6" height="14.6" rx="1" fill="#fff" stroke="#5c5c5c" stroke-width="1.5"/></svg><svg style="position:absolute;left:939.2px;top:617.0px" width="17" height="17"><rect x="1.2" y="1.2" width="14.6" height="14.6" rx="1" fill="#fff" stroke="#5c5c5c" stroke-width="1.5"/></svg><svg style="position:absolute;left:1025.4px;top:617.0px" width="17" height="17"><rect x="1.2" y="1.2" width="14.6" height="14.6" rx="1" fill="#fff" stroke="#5c5c5c" stroke-width="1.5"/><path d="M3.4,8.3 L7.5,12.2 L14.2,4.8" fill="none" stroke="#575757" stroke-width="1.9"/></svg><svg style="position:absolute;left:852.8px;top:637.0px" width="17" height="17"><rect x="1.2" y="1.2" width="14.6" height="14.6" rx="1" fill="#fff" stroke="#5c5c5c" stroke-width="1.5"/></svg><svg style="position:absolute;left:939.2px;top:637.0px" width="17" height="17"><rect x="1.2" y="1.2" width="14.6" height="14.6" rx="1" fill="#fff" stroke="#5c5c5c" stroke-width="1.5"/></svg><svg style="position:absolute;left:1025.4px;top:637.0px" width="17" height="17"><rect x="1.2" y="1.2" width="14.6" height="14.6" rx="1" fill="#fff" stroke="#5c5c5c" stroke-width="1.5"/><path d="M3.4,8.3 L7.5,12.2 L14.2,4.8" fill="none" stroke="#575757" stroke-width="1.9"/></svg><svg style="position:absolute;left:852.8px;top:657.0px" width="17" height="17"><rect x="1.2" y="1.2" width="14.6" height="14.6" rx="1" fill="#fff" stroke="#5c5c5c" stroke-width="1.5"/></svg><svg style="position:absolute;left:939.2px;top:657.0px" width="17" height="17"><rect x="1.2" y="1.2" width="14.6" height="14.6" rx="1" fill="#fff" stroke="#5c5c5c" stroke-width="1.5"/></svg><svg style="position:absolute;left:1025.4px;top:657.0px" width="17" height="17"><rect x="1.2" y="1.2" width="14.6" height="14.6" rx="1" fill="#fff" stroke="#5c5c5c" stroke-width="1.5"/><path d="M3.4,8.3 L7.5,12.2 L14.2,4.8" fill="none" stroke="#575757" stroke-width="1.9"/></svg><svg style="position:absolute;left:852.8px;top:677.0px" width="17" height="17"><rect x="1.2" y="1.2" width="14.6" height="14.6" rx="1" fill="#fff" stroke="#5c5c5c" stroke-width="1.5"/><path d="M3.4,8.3 L7.5,12.2 L14.2,4.8" fill="none" stroke="#575757" stroke-width="1.9"/></svg><svg style="position:absolute;left:939.2px;top:677.0px" width="17" height="17"><rect x="1.2" y="1.2" width="14.6" height="14.6" rx="1" fill="#fff" stroke="#5c5c5c" stroke-width="1.5"/></svg><svg style="position:absolute;left:1025.4px;top:677.0px" width="17" height="17"><rect x="1.2" y="1.2" width="14.6" height="14.6" rx="1" fill="#fff" stroke="#5c5c5c" stroke-width="1.5"/><path d="M3.4,8.3 L7.5,12.2 L14.2,4.8" fill="none" stroke="#575757" stroke-width="1.9"/></svg><svg style="position:absolute;left:852.8px;top:697.0px" width="17" height="17"><rect x="1.2" y="1.2" width="14.6" height="14.6" rx="1" fill="#fff" stroke="#5c5c5c" stroke-width="1.5"/></svg><svg style="position:absolute;left:939.2px;top:697.0px" width="17" height="17"><rect x="1.2" y="1.2" width="14.6" height="14.6" rx="1" fill="#fff" stroke="#5c5c5c" stroke-width="1.5"/></svg><svg style="position:absolute;left:1025.4px;top:697.0px" width="17" height="17"><rect x="1.2" y="1.2" width="14.6" height="14.6" rx="1" fill="#fff" stroke="#5c5c5c" stroke-width="1.5"/><path d="M3.4,8.3 L7.5,12.2 L14.2,4.8" fill="none" stroke="#575757" stroke-width="1.9"/></svg><svg style="position:absolute;left:852.8px;top:717.0px" width="17" height="17"><rect x="1.2" y="1.2" width="14.6" height="14.6" rx="1" fill="#fff" stroke="#5c5c5c" stroke-width="1.5"/></svg><svg style="position:absolute;left:939.2px;top:717.0px" width="17" height="17"><rect x="1.2" y="1.2" width="14.6" height="14.6" rx="1" fill="#fff" stroke="#5c5c5c" stroke-width="1.5"/></svg><svg style="position:absolute;left:1025.4px;top:717.0px" width="17" height="17"><rect x="1.2" y="1.2" width="14.6" height="14.6" rx="1" fill="#fff" stroke="#5c5c5c" stroke-width="1.5"/><path d="M3.4,8.3 L7.5,12.2 L14.2,4.8" fill="none" stroke="#575757" stroke-width="1.9"/></svg><svg style="position:absolute;left:852.8px;top:737.0px" width="17" height="17"><rect x="1.2" y="1.2" width="14.6" height="14.6" rx="1" fill="#fff" stroke="#5c5c5c" stroke-width="1.5"/></svg><svg style="position:absolute;left:939.2px;top:737.0px" width="17" height="17"><rect x="1.2" y="1.2" width="14.6" height="14.6" rx="1" fill="#fff" stroke="#5c5c5c" stroke-width="1.5"/></svg><svg style="position:absolute;left:1025.4px;top:737.0px" width="17" height="17"><rect x="1.2" y="1.2" width="14.6" height="14.6" rx="1" fill="#fff" stroke="#5c5c5c" stroke-width="1.5"/><path d="M3.4,8.3 L7.5,12.2 L14.2,4.8" fill="none" stroke="#575757" stroke-width="1.9"/></svg><svg style="position:absolute;left:852.8px;top:757.0px" width="17" height="17"><rect x="1.2" y="1.2" width="14.6" height="14.6" rx="1" fill="#fff" stroke="#5c5c5c" stroke-width="1.5"/></svg><svg style="position:absolute;left:939.2px;top:757.0px" width="17" height="17"><rect x="1.2" y="1.2" width="14.6" height="14.6" rx="1" fill="#fff" stroke="#5c5c5c" stroke-width="1.5"/></svg><svg style="position:absolute;left:1025.4px;top:757.0px" width="17" height="17"><rect x="1.2" y="1.2" width="14.6" height="14.6" rx="1" fill="#fff" stroke="#5c5c5c" stroke-width="1.5"/><path d="M3.4,8.3 L7.5,12.2 L14.2,4.8" fill="none" stroke="#575757" stroke-width="1.9"/></svg><svg style="position:absolute;left:852.8px;top:777.0px" width="17" height="17"><rect x="1.2" y="1.2" width="14.6" height="14.6" rx="1" fill="#fff" stroke="#5c5c5c" stroke-width="1.5"/></svg><svg style="position:absolute;left:939.2px;top:777.0px" width="17" height="17"><rect x="1.2" y="1.2" width="14.6" height="14.6" rx="1" fill="#fff" stroke="#5c5c5c" stroke-width="1.5"/></svg><svg style="position:absolute;left:1025.4px;top:777.0px" width="17" height="17"><rect x="1.2" y="1.2" width="14.6" height="14.6" rx="1" fill="#fff" stroke="#5c5c5c" stroke-width="1.5"/><path d="M3.4,8.3 L7.5,12.2 L14.2,4.8" fill="none" stroke="#575757" stroke-width="1.9"/></svg><svg style="position:absolute;left:852.8px;top:797.0px" width="17" height="17"><rect x="1.2" y="1.2" width="14.6" height="14.6" rx="1" fill="#fff" stroke="#5c5c5c" stroke-width="1.5"/></svg><svg style="position:absolute;left:939.2px;top:797.0px" width="17" height="17"><rect x="1.2" y="1.2" width="14.6" height="14.6" rx="1" fill="#fff" stroke="#5c5c5c" stroke-width="1.5"/></svg><svg style="position:absolute;left:1025.4px;top:797.0px" width="17" height="17"><rect x="1.2" y="1.2" width="14.6" height="14.6" rx="1" fill="#fff" stroke="#5c5c5c" stroke-width="1.5"/><path d="M3.4,8.3 L7.5,12.2 L14.2,4.8" fill="none" stroke="#575757" stroke-width="1.9"/></svg><svg style="position:absolute;left:852.8px;top:817.0px" width="17" height="17"><rect x="1.2" y="1.2" width="14.6" height="14.6" rx="1" fill="#fff" stroke="#5c5c5c" stroke-width="1.5"/></svg><svg style="position:absolute;left:939.2px;top:817.0px" width="17" height="17"><rect x="1.2" y="1.2" width="14.6" height="14.6" rx="1" fill="#fff" stroke="#5c5c5c" stroke-width="1.5"/></svg><svg style="position:absolute;left:1025.4px;top:817.0px" width="17" height="17"><rect x="1.2" y="1.2" width="14.6" height="14.6" rx="1" fill="#fff" stroke="#5c5c5c" stroke-width="1.5"/></svg><svg style="position:absolute;left:852.8px;top:837.0px" width="17" height="17"><rect x="1.2" y="1.2" width="14.6" height="14.6" rx="1" fill="#fff" stroke="#5c5c5c" stroke-width="1.5"/></svg><svg style="position:absolute;left:939.2px;top:837.0px" width="17" height="17"><rect x="1.2" y="1.2" width="14.6" height="14.6" rx="1" fill="#fff" stroke="#5c5c5c" stroke-width="1.5"/></svg><svg style="position:absolute;left:1025.4px;top:837.0px" width="17" height="17"><rect x="1.2" y="1.2" width="14.6" height="14.6" rx="1" fill="#fff" stroke="#5c5c5c" stroke-width="1.5"/></svg><svg style="position:absolute;left:852.8px;top:857.0px" width="17" height="17"><rect x="1.2" y="1.2" width="14.6" height="14.6" rx="1" fill="#fff" stroke="#5c5c5c" stroke-width="1.5"/></svg><svg style="position:absolute;left:939.2px;top:857.0px" width="17" height="17"><rect x="1.2" y="1.2" width="14.6" height="14.6" rx="1" fill="#fff" stroke="#5c5c5c" stroke-width="1.5"/></svg><svg style="position:absolute;left:1025.4px;top:857.0px" width="17" height="17"><rect x="1.2" y="1.2" width="14.6" height="14.6" rx="1" fill="#fff" stroke="#5c5c5c" stroke-width="1.5"/><path d="M3.4,8.3 L7.5,12.2 L14.2,4.8" fill="none" stroke="#575757" stroke-width="1.9"/></svg><svg style="position:absolute;left:852.8px;top:877.0px" width="17" height="17"><rect x="1.2" y="1.2" width="14.6" height="14.6" rx="1" fill="#fff" stroke="#5c5c5c" stroke-width="1.5"/></svg><svg style="position:absolute;left:939.2px;top:877.0px" width="17" height="17"><rect x="1.2" y="1.2" width="14.6" height="14.6" rx="1" fill="#fff" stroke="#5c5c5c" stroke-width="1.5"/></svg><svg style="position:absolute;left:1025.4px;top:877.0px" width="17" height="17"><rect x="1.2" y="1.2" width="14.6" height="14.6" rx="1" fill="#fff" stroke="#5c5c5c" stroke-width="1.5"/><path d="M3.4,8.3 L7.5,12.2 L14.2,4.8" fill="none" stroke="#575757" stroke-width="1.9"/></svg><svg style="position:absolute;left:852.8px;top:897.0px" width="17" height="17"><rect x="1.2" y="1.2" width="14.6" height="14.6" rx="1" fill="#fff" stroke="#5c5c5c" stroke-width="1.5"/></svg><svg style="position:absolute;left:939.2px;top:897.0px" width="17" height="17"><rect x="1.2" y="1.2" width="14.6" height="14.6" rx="1" fill="#fff" stroke="#5c5c5c" stroke-width="1.5"/></svg><svg style="position:absolute;left:1025.4px;top:897.0px" width="17" height="17"><rect x="1.2" y="1.2" width="14.6" height="14.6" rx="1" fill="#fff" stroke="#5c5c5c" stroke-width="1.5"/></svg>
<div style="position:absolute;left:1158px;top:237px;width:21px;height:690px;background:#7096c0"></div>
<div style="position:absolute;left:1158px;top:237px;width:21px;height:20.5px;background:linear-gradient(90deg,#dae6f7 50%,#c2d6f0 50%);border:1.6px solid #6a7fa6;box-sizing:border-box"></div>
<svg style="position:absolute;left:1161.5px;top:242px" width="14" height="10"><path d="M1.8,7.8 H12.8 L7.3,1.8Z" fill="#3e4a66"/></svg>
<div style="position:absolute;left:1158px;top:854px;width:21px;height:56px;background:linear-gradient(90deg,#dae6f7 50%,#c2d6f0 50%);border:1.6px solid #6a7fa6;box-sizing:border-box"></div>
<div style="position:absolute;left:1158px;top:909px;width:21px;height:20px;background:linear-gradient(90deg,#dae6f7 50%,#c2d6f0 50%);border:1.6px solid #6a7fa6;box-sizing:border-box"></div>
<svg style="position:absolute;left:1161.5px;top:914px" width="14" height="10"><path d="M1.8,2 H12.8 L7.3,8Z" fill="#3e4a66"/></svg>
<div style="position:absolute;left:446px;top:235px;width:735px;height:1px;background:#e2e2e2"></div>
<div style="position:absolute;left:446px;top:236px;width:733px;height:1.2px;background:#6e6e6e"></div>
<div style="position:absolute;left:1179px;top:236px;width:2px;height:691px;background:#d4d4d4"></div>
<div style="position:absolute;left:1181px;top:235px;width:5px;height:692px;background:#9c9c9c"></div>
<div style="position:absolute;left:1186px;top:235px;width:1px;height:692px;background:#dcdcdc"></div>
<div style="position:absolute;left:1187px;top:235px;width:693px;height:692px;background:#f0f0f0"></div>
<div style="position:absolute;left:1187px;top:235px;width:693px;height:29px;background:linear-gradient(#eeeeee,#f9f9f9)"></div>
<div style="position:absolute;left:1187px;top:264px;width:1px;height:663px;background:#a0a0a0"></div>
<svg style="position:absolute;left:1187px;top:235px" width="693" height="32" viewBox="1187 235 693 32">
<path d="M1187,264.5 H1194 L1205,244 Q1207,240.5 1212,240.5 H1305 Q1310,240.5 1312,244 L1323.5,264.5 H1880" fill="none" stroke="#a4a4a4" stroke-width="1"/>
<path d="M1194.5,264.5 L1205,244 Q1207,241 1212,241 H1305 Q1310,241 1312,244 L1323,264.5Z" fill="#f7f7f7"/>
<path d="M1316.5,252 L1321,244 Q1323,240.5 1328,240.5 H1415 Q1420,240.5 1422,244 L1437,264.5" fill="none" stroke="#a4a4a4" stroke-width="1"/>
<path d="M1194,264.5 L1205,244 Q1207,240.5 1212,240.5 H1305 Q1310,240.5 1312,244 L1323.5,264.5" fill="none" stroke="#a4a4a4" stroke-width="1"/>
<g transform="translate(1209,243)"><path d="M5,3 H11 L14,6 V17 H5Z" fill="#efe7d7" stroke="#c9c0b0" stroke-width="0.8"/><path d="M1,6 H7 L10,9 V19 H1Z" fill="#f5efe2" stroke="#c9c0b0" stroke-width="0.8"/></g>
<g transform="translate(1322,245)"><rect x="0.5" y="2" width="18" height="9" rx="2" fill="#d8d8d8" stroke="#7a7a7a" stroke-width="0.8"/><rect x="1" y="8" width="17" height="3" fill="#5a5a5a"/><circle cx="13.5" cy="5.5" r="2" fill="#2a4a2a"/></g>
</svg>
<div style="position:absolute;left:1229.8px;top:243.02px;font:bold 15.4px/18.48px 'Liberation Sans', sans-serif;color:#000;letter-spacing:-0.37px;white-space:nowrap;">Généralités</div>
<div style="position:absolute;left:1345px;top:243.55px;font:normal 14px/16.80px 'Liberation Sans', sans-serif;color:#1c1c5c;letter-spacing:-0.4px;white-space:nowrap;">Qui, Quand ?</div>
<div style="position:absolute;left:1223.9px;top:270.85px;font:normal 14px/16.80px 'Liberation Sans', sans-serif;color:#000;letter-spacing:-0.211px;white-space:nowrap;">Unité Pro.</div><div style="position:absolute;left:1302.5px;top:270.85px;font:normal 14px/16.80px 'Liberation Sans', sans-serif;color:#000;letter-spacing:0.5px;white-space:nowrap;">U1</div><div style="position:absolute;left:1443.8px;top:270.85px;font:normal 14px/16.80px 'Liberation Sans', sans-serif;color:#000;letter-spacing:-0.274px;white-space:nowrap;">Site de production 1</div><div style="position:absolute;left:1420px;top:269.0px;width:17px;height:17px;background:#fff;border:2px solid #c8c8c8;box-sizing:border-box"></div><div style="position:absolute;left:1228.5px;width:400px;text-align:center;top:270.60px;font:bold 13px/15.60px 'Liberation Sans', sans-serif;color:#000;letter-spacing:0px;white-space:nowrap;">?</div><div style="position:absolute;left:1193.7px;top:294.57px;font:normal 14px/16.80px 'Liberation Sans', sans-serif;color:#000;letter-spacing:0.118px;white-space:nowrap;">Cad.Uti.Gamn</div><div style="position:absolute;left:1302.5px;top:294.57px;font:normal 14px/16.80px 'Liberation Sans', sans-serif;color:#000;letter-spacing:0.5px;white-space:nowrap;">U1</div><div style="position:absolute;left:1443.8px;top:294.57px;font:normal 14px/16.80px 'Liberation Sans', sans-serif;color:#000;letter-spacing:-0.267px;white-space:nowrap;">Unité 1</div><div style="position:absolute;left:1420px;top:292.72px;width:17px;height:17px;background:#fff;border:2px solid #c8c8c8;box-sizing:border-box"></div><div style="position:absolute;left:1228.5px;width:400px;text-align:center;top:294.32px;font:bold 13px/15.60px 'Liberation Sans', sans-serif;color:#000;letter-spacing:0px;white-space:nowrap;">?</div><div style="position:absolute;left:1215.5px;top:318.29px;font:normal 14px/16.80px 'Liberation Sans', sans-serif;color:#000;letter-spacing:-0.55px;white-space:nowrap;">Famille JAT</div><div style="position:absolute;left:1420px;top:316.44px;width:17px;height:17px;background:#fff;border:2px solid #c8c8c8;box-sizing:border-box"></div><div style="position:absolute;left:1228.5px;width:400px;text-align:center;top:318.04px;font:bold 13px/15.60px 'Liberation Sans', sans-serif;color:#000;letter-spacing:0px;white-space:nowrap;">?</div><div style="position:absolute;left:1193.7px;top:342.01px;font:normal 14px/16.80px 'Liberation Sans', sans-serif;color:#000;letter-spacing:-0.421px;white-space:nowrap;">Gam.Geni.F.Att.</div><div style="position:absolute;left:1302.5px;top:342.01px;font:normal 14px/16.80px 'Liberation Sans', sans-serif;color:#000;letter-spacing:-0.25px;white-space:nowrap;">PVC</div><div style="position:absolute;left:1443.8px;top:342.01px;font:normal 14px/16.80px 'Liberation Sans', sans-serif;color:#000;letter-spacing:-0.521px;white-space:nowrap;">Menuiseries PVC</div><div style="position:absolute;left:1420px;top:340.15999999999997px;width:17px;height:17px;background:#fff;border:2px solid #c8c8c8;box-sizing:border-box"></div><div style="position:absolute;left:1228.5px;width:400px;text-align:center;top:341.76px;font:bold 13px/15.60px 'Liberation Sans', sans-serif;color:#000;letter-spacing:0px;white-space:nowrap;">?</div><div style="position:absolute;left:1208.8px;top:365.73px;font:normal 14px/16.80px 'Liberation Sans', sans-serif;color:#000;letter-spacing:-0.08px;white-space:nowrap;">Règle Stock</div><div style="position:absolute;left:1420px;top:363.88px;width:17px;height:17px;background:#fff;border:2px solid #c8c8c8;box-sizing:border-box"></div><div style="position:absolute;left:1228.5px;width:400px;text-align:center;top:365.48px;font:bold 13px/15.60px 'Liberation Sans', sans-serif;color:#000;letter-spacing:0px;white-space:nowrap;">?</div><div style="position:absolute;left:1205.2px;top:389.45px;font:normal 14px/16.80px 'Liberation Sans', sans-serif;color:#000;letter-spacing:-0.291px;white-space:nowrap;">Sec.Sor.Csa.</div><div style="position:absolute;left:1206.4px;top:413.17px;font:normal 14px/16.80px 'Liberation Sans', sans-serif;color:#000;letter-spacing:-0.218px;white-space:nowrap;">Mvt.Sor.Csa.</div><div style="position:absolute;left:1214px;top:436.89px;font:normal 14px/16.80px 'Liberation Sans', sans-serif;color:#000;letter-spacing:-0.333px;white-space:nowrap;">Sec.Ent.OF</div><div style="position:absolute;left:1215.5px;top:460.61px;font:normal 14px/16.80px 'Liberation Sans', sans-serif;color:#000;letter-spacing:-0.278px;white-space:nowrap;">Mvt.Ent.OF</div><div style="position:absolute;left:1210px;top:484.33px;font:normal 14px/16.80px 'Liberation Sans', sans-serif;color:#000;letter-spacing:-0.333px;white-space:nowrap;">Sec.Des.OF</div><div style="position:absolute;left:1205.6px;top:508.05px;font:normal 14px/16.80px 'Liberation Sans', sans-serif;color:#000;letter-spacing:-0.327px;white-space:nowrap;">Mvt.Desti.OF</div><div style="position:absolute;left:1215.9px;top:531.77px;font:normal 14px/16.80px 'Liberation Sans', sans-serif;color:#000;letter-spacing:-0.264px;white-space:nowrap;">Trs.Sor.Lct.</div><div style="position:absolute;left:1420px;top:529.92px;width:17px;height:17px;background:#fff;border:2px solid #c8c8c8;box-sizing:border-box"></div><div style="position:absolute;left:1228.5px;width:400px;text-align:center;top:531.52px;font:bold 13px/15.60px 'Liberation Sans', sans-serif;color:#000;letter-spacing:0px;white-space:nowrap;">?</div><div style="position:absolute;left:1211.8px;top:555.49px;font:normal 14px/16.80px 'Liberation Sans', sans-serif;color:#000;letter-spacing:-0.345px;white-space:nowrap;">Trs.Sor.Fab.</div><div style="position:absolute;left:1420px;top:553.64px;width:17px;height:17px;background:#fff;border:2px solid #c8c8c8;box-sizing:border-box"></div><div style="position:absolute;left:1228.5px;width:400px;text-align:center;top:555.24px;font:bold 13px/15.60px 'Liberation Sans', sans-serif;color:#000;letter-spacing:0px;white-space:nowrap;">?</div><div style="position:absolute;left:1197.6px;top:579.21px;font:normal 14px/16.80px 'Liberation Sans', sans-serif;color:#000;letter-spacing:-0.133px;white-space:nowrap;">Scénario Déc.</div><div style="position:absolute;left:1420px;top:577.36px;width:17px;height:17px;background:#fff;border:2px solid #c8c8c8;box-sizing:border-box"></div><div style="position:absolute;left:1228.5px;width:400px;text-align:center;top:578.96px;font:bold 13px/15.60px 'Liberation Sans', sans-serif;color:#000;letter-spacing:0px;white-space:nowrap;">?</div><div style="position:absolute;left:1218px;top:602.93px;font:normal 14px/16.80px 'Liberation Sans', sans-serif;color:#000;letter-spacing:-0.556px;white-space:nowrap;">Type Ordre</div><div style="position:absolute;left:1420px;top:601.08px;width:17px;height:17px;background:#fff;border:2px solid #c8c8c8;box-sizing:border-box"></div><div style="position:absolute;left:1228.5px;width:400px;text-align:center;top:602.68px;font:bold 13px/15.60px 'Liberation Sans', sans-serif;color:#000;letter-spacing:0px;white-space:nowrap;">?</div><div style="position:absolute;left:1194.2px;top:626.65px;font:normal 14px/16.80px 'Liberation Sans', sans-serif;color:#000;letter-spacing:-0.015px;white-space:nowrap;">Date Prév. Del</div><div style="position:absolute;left:1420px;top:624.8px;width:17px;height:17px;background:#fff;border:2px solid #c8c8c8;box-sizing:border-box"></div><div style="position:absolute;left:1228.5px;width:400px;text-align:center;top:626.40px;font:bold 13px/15.60px 'Liberation Sans', sans-serif;color:#000;letter-spacing:0px;white-space:nowrap;">?</div><div style="position:absolute;left:1195.2px;top:650.37px;font:normal 14px/16.80px 'Liberation Sans', sans-serif;color:#000;letter-spacing:-0.017px;white-space:nowrap;">N.Or/Dat.Déb.</div><div style="position:absolute;left:1197.6px;top:674.09px;font:normal 14px/16.80px 'Liberation Sans', sans-serif;color:#000;letter-spacing:-0.2px;white-space:nowrap;">Date Prév. Fin</div><div style="position:absolute;left:1420px;top:672.24px;width:17px;height:17px;background:#fff;border:2px solid #c8c8c8;box-sizing:border-box"></div><div style="position:absolute;left:1228.5px;width:400px;text-align:center;top:673.84px;font:bold 13px/15.60px 'Liberation Sans', sans-serif;color:#000;letter-spacing:0px;white-space:nowrap;">?</div><div style="position:absolute;left:1206.3px;top:697.81px;font:normal 14px/16.80px 'Liberation Sans', sans-serif;color:#000;letter-spacing:-0.118px;white-space:nowrap;">N.Or/Dat.Fin</div><div style="position:absolute;left:1303.5px;top:697.81px;font:normal 14px/16.80px 'Liberation Sans', sans-serif;color:#000;letter-spacing:-0.283px;white-space:nowrap;">0000000</div><div style="position:absolute;left:1195.2px;top:721.53px;font:normal 14px/16.80px 'Liberation Sans', sans-serif;color:#000;letter-spacing:-0.56px;white-space:nowrap;">NumOrd Prev</div><div style="position:absolute;left:1211.5px;top:745.25px;font:normal 14px/16.80px 'Liberation Sans', sans-serif;color:#000;letter-spacing:-0.55px;white-space:nowrap;">Ges.Co-Pro.</div><div style="position:absolute;left:1208.3px;top:768.97px;font:normal 14px/16.80px 'Liberation Sans', sans-serif;color:#000;letter-spacing:-0.525px;white-space:nowrap;">Art. Co-Prod.</div>
<div style="position:absolute;left:1303.2px;top:628.18px;font:normal 12.8px/15.36px 'Liberation Mono', monospace;color:#2a2a40;letter-spacing:1.3px;white-space:nowrap;-webkit-text-stroke:0.4px #2a2a40;">27/12/2023</div>
<div style="position:absolute;left:1303.2px;top:675.58px;font:normal 12.8px/15.36px 'Liberation Mono', monospace;color:#2a2a40;letter-spacing:1.3px;white-space:nowrap;-webkit-text-stroke:0.4px #2a2a40;">08/01/2024</div>
<div style="position:absolute;left:1299.7px;top:746.2px;width:12.2px;height:12.4px;background:#fff;border:1px solid #d2d2d2;box-sizing:border-box"></div>
<div style="position:absolute;left:1299.2px;top:766.2px;width:581px;height:161px;background:#f0f0f0;border-top:1.5px solid #a0a0a0;border-left:1.5px solid #a0a0a0;box-sizing:border-box"></div>
<div style="position:absolute;left:1300.8px;top:767.7px;width:579px;height:1px;background:#fff"></div>
<div style="position:absolute;left:1300.8px;top:767.7px;width:1px;height:160px;background:#fff"></div>
<div style="position:absolute;left:1858px;top:768.5px;width:1.5px;height:159px;background:#fafafa"></div>
<svg style="position:absolute;left:1862px;top:775px" width="14" height="10"><path d="M2,8 L7,3 L12,8" fill="none" stroke="#c0c0c0" stroke-width="2"/></svg>
<svg style="position:absolute;left:1862px;top:921px" width="14" height="10"><path d="M2,3 L7,8 L12,3" fill="none" stroke="#c0c0c0" stroke-width="2"/></svg>
<div style="position:absolute;left:521px;top:28px;width:317px;height:905px;background:#f2f2f2;border:1px solid #c6c6c6;border-right:1.8px solid #cecece;box-sizing:border-box"></div>
<div style="position:absolute;left:838px;top:36px;width:5px;height:891px;background:linear-gradient(90deg,rgba(0,0,0,0.48) 0,rgba(0,0,0,0.36) 1.5px,rgba(0,0,0,0.12) 3px,rgba(0,0,0,0) 5px);-webkit-mask-image:linear-gradient(#000,#000);"></div>
<div style="position:absolute;left:559px;top:29px;width:1px;height:898px;background:#ebebeb"></div>
<div style="position:absolute;left:564.5px;top:36.50px;font:normal 15px/18.00px 'Liberation Sans', sans-serif;color:#000;letter-spacing:-0.2px;white-space:nowrap;">Gestion Lignes (Maj+F3)</div><div style="position:absolute;left:560px;top:63px;width:273px;height:1px;background:#d7d7d7"></div><div style="position:absolute;left:564.5px;top:72.72px;font:normal 15px/18.00px 'Liberation Sans', sans-serif;color:#000;letter-spacing:-0.183px;white-space:nowrap;">Création (F9)</div><div style="position:absolute;left:564.5px;top:100.28px;font:normal 15px/18.00px 'Liberation Sans', sans-serif;color:#000;letter-spacing:0.163px;white-space:nowrap;">Modification (F1)</div><div style="position:absolute;left:564.5px;top:127.84px;font:normal 15px/18.00px 'Liberation Sans', sans-serif;color:#858585;letter-spacing:-0.387px;white-space:nowrap;">Suppression (F6)</div><div style="position:absolute;left:564.5px;top:155.40px;font:normal 15px/18.00px 'Liberation Sans', sans-serif;color:#000;letter-spacing:-0.3px;white-space:nowrap;">Détail (F8)</div><div style="position:absolute;left:564.5px;top:182.96px;font:normal 15px/18.00px 'Liberation Sans', sans-serif;color:#000;letter-spacing:-0.033px;white-space:nowrap;">Consultation Inf. Techniques</div><div style="position:absolute;left:564.5px;top:210.52px;font:normal 15px/18.00px 'Liberation Sans', sans-serif;color:#858585;letter-spacing:-0.127px;white-space:nowrap;">Historique (F10)</div><div style="position:absolute;left:564.5px;top:238.08px;font:normal 15px/18.00px 'Liberation Sans', sans-serif;color:#858585;letter-spacing:-0.279px;white-space:nowrap;">Eléments Récents (Maj+F8)</div><div style="position:absolute;left:564.5px;top:265.64px;font:normal 15px/18.00px 'Liberation Sans', sans-serif;color:#000;letter-spacing:-0.089px;white-space:nowrap;">Historique Messages / Entité</div><div style="position:absolute;left:564.5px;top:293.20px;font:normal 15px/18.00px 'Liberation Sans', sans-serif;color:#858585;letter-spacing:-0.265px;white-space:nowrap;">Envoyer un message</div><div style="position:absolute;left:560px;top:320px;width:273px;height:1px;background:#d7d7d7"></div><div style="position:absolute;left:564.5px;top:329.42px;font:normal 15px/18.00px 'Liberation Sans', sans-serif;color:#000;letter-spacing:-0.192px;white-space:nowrap;">Nouvelle Tâche</div><div style="position:absolute;left:564.5px;top:356.98px;font:normal 15px/18.00px 'Liberation Sans', sans-serif;color:#858585;letter-spacing:-0.376px;white-space:nowrap;">Tâches de l'Entité</div><div style="position:absolute;left:560px;top:383px;width:273px;height:1px;background:#d7d7d7"></div><div style="position:absolute;left:564.5px;top:393.20px;font:normal 15px/18.00px 'Liberation Sans', sans-serif;color:#000;letter-spacing:0.006px;white-space:nowrap;">Joindre un document</div><div style="position:absolute;left:564.5px;top:420.76px;font:normal 15px/18.00px 'Liberation Sans', sans-serif;color:#000;letter-spacing:-0.392px;white-space:nowrap;">Documents GED</div><div style="position:absolute;left:560px;top:447px;width:273px;height:1px;background:#d7d7d7"></div><div style="position:absolute;left:564.5px;top:456.98px;font:normal 15px/18.00px 'Liberation Sans', sans-serif;color:#000;letter-spacing:-0.85px;white-space:nowrap;">Accès à</div><svg style="position:absolute;left:814px;top:460.5px" width="10" height="12"><path d="M3,1.8 L7.5,6 L3,10.2" fill="none" stroke="#5a5a5a" stroke-width="1.4"/></svg><div style="position:absolute;left:560px;top:483px;width:273px;height:1px;background:#d7d7d7"></div><div style="position:absolute;left:564.5px;top:493.20px;font:normal 15px/18.00px 'Liberation Sans', sans-serif;color:#000;letter-spacing:0.025px;white-space:nowrap;">Lancement Atelier</div><svg style="position:absolute;left:814px;top:496.7px" width="10" height="12"><path d="M3,1.8 L7.5,6 L3,10.2" fill="none" stroke="#5a5a5a" stroke-width="1.4"/></svg><div style="position:absolute;left:560px;top:520px;width:273px;height:1px;background:#d7d7d7"></div><div style="position:absolute;left:564.5px;top:529.42px;font:normal 15px/18.00px 'Liberation Sans', sans-serif;color:#000;letter-spacing:-0.064px;white-space:nowrap;">Déclaration de Fabrication</div><svg style="position:absolute;left:814px;top:532.9px" width="10" height="12"><path d="M3,1.8 L7.5,6 L3,10.2" fill="none" stroke="#5a5a5a" stroke-width="1.4"/></svg><div style="position:absolute;left:564.5px;top:556.98px;font:normal 15px/18.00px 'Liberation Sans', sans-serif;color:#000;letter-spacing:-0.196px;white-space:nowrap;">His. Déclarations / Série</div><div style="position:absolute;left:560px;top:583px;width:273px;height:1px;background:#d7d7d7"></div><div style="position:absolute;left:564.5px;top:593.20px;font:normal 15px/18.00px 'Liberation Sans', sans-serif;color:#000;letter-spacing:-0.074px;white-space:nowrap;">Informations Suivies</div><div style="position:absolute;left:560px;top:620px;width:273px;height:1px;background:#d7d7d7"></div><div style="position:absolute;left:564.5px;top:629.42px;font:normal 15px/18.00px 'Liberation Sans', sans-serif;color:#000;letter-spacing:-0.023px;white-space:nowrap;">Déclaration Co-Produits</div><div style="position:absolute;left:560px;top:656px;width:273px;height:1px;background:#d7d7d7"></div><div style="position:absolute;left:564.5px;top:665.64px;font:normal 15px/18.00px 'Liberation Sans', sans-serif;color:#000;letter-spacing:-0.258px;white-space:nowrap;">Composants Rattachés</div><div style="position:absolute;left:523.5px;top:688.1999999999999px;width:310px;height:27.6px;background:#99d1ff"></div><div style="position:absolute;left:523.5px;top:689.9px;width:303px;height:24.9px;background:#9063f2"></div><div style="position:absolute;left:564.5px;top:693.20px;font:normal 15px/18.00px 'Liberation Sans', sans-serif;color:#000;letter-spacing:-0.089px;white-space:nowrap;">Visualisation File d'Attente</div><div style="position:absolute;left:564.5px;top:720.76px;font:normal 15px/18.00px 'Liberation Sans', sans-serif;color:#000;letter-spacing:-0.067px;white-space:nowrap;">Caract. File d'Attente</div><div style="position:absolute;left:560px;top:747px;width:273px;height:1px;background:#d7d7d7"></div><div style="position:absolute;left:564.5px;top:756.98px;font:normal 15px/18.00px 'Liberation Sans', sans-serif;color:#000;letter-spacing:-0.342px;white-space:nowrap;">Solde Série (Maj+F6)</div><div style="position:absolute;left:564.5px;top:784.54px;font:normal 15px/18.00px 'Liberation Sans', sans-serif;color:#000;letter-spacing:-0.46px;white-space:nowrap;">Déblocage Séries</div><div style="position:absolute;left:564.5px;top:812.10px;font:normal 15px/18.00px 'Liberation Sans', sans-serif;color:#000;letter-spacing:-0.326px;white-space:nowrap;">Re-génération Séries</div><div style="position:absolute;left:560px;top:839px;width:273px;height:1px;background:#d7d7d7"></div><div style="position:absolute;left:564.5px;top:848.32px;font:normal 15px/18.00px 'Liberation Sans', sans-serif;color:#000;letter-spacing:-0.2px;white-space:nowrap;">Ma Présentation de Démarrage</div><div style="position:absolute;left:564.5px;top:875.88px;font:normal 15px/18.00px 'Liberation Sans', sans-serif;color:#000;letter-spacing:-0.168px;white-space:nowrap;">Actualiser la Présentation</div><div style="position:absolute;left:564.5px;top:903.44px;font:normal 15px/18.00px 'Liberation Sans', sans-serif;color:#000;letter-spacing:-0.2px;white-space:nowrap;">Présentations</div><svg style="position:absolute;left:814px;top:906.9px" width="10" height="12"><path d="M3,1.8 L7.5,6 L3,10.2" fill="none" stroke="#5a5a5a" stroke-width="1.4"/></svg>
<svg style="position:absolute;left:706px;top:694px" width="24" height="34" viewBox="0 0 24 34">
<defs><clipPath id="cup"><rect x="0" y="0" width="24" height="20.5"/></clipPath></defs>
<path d="M2.8,2.6 V23.6 L7.4,18.7 L11.8,29.3 L15.8,28.3 L11.6,17.7 H17.8Z" fill="#ffffff" stroke="#000" stroke-width="1.9" stroke-linejoin="miter" stroke-miterlimit="6"/>
<path clip-path="url(#cup)" d="M2.8,2.6 V23.6 L7.4,18.7 L11.8,29.3 L15.8,28.3 L11.6,17.7 H17.8Z" fill="#ff57ff" stroke="#000" stroke-width="1.9" stroke-linejoin="miter" stroke-miterlimit="6"/>
</svg>
</body></html>
